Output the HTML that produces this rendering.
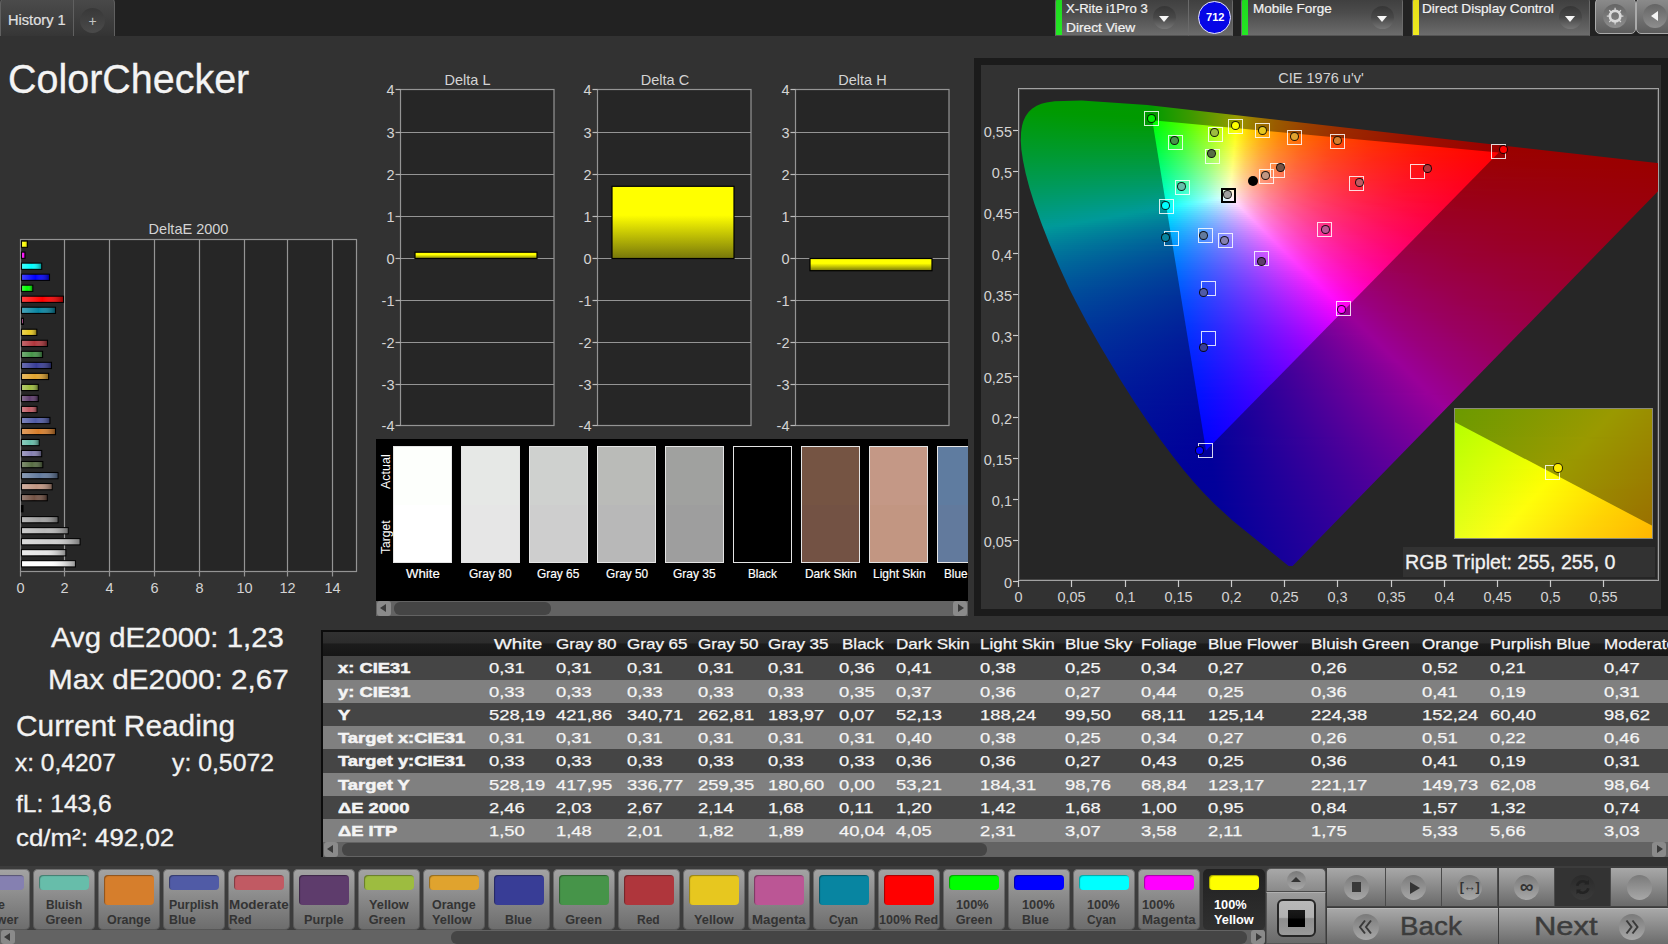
<!DOCTYPE html>
<html><head><meta charset="utf-8"><title>ColorChecker</title>
<style>
html,body{margin:0;padding:0}
body{width:1668px;height:944px;overflow:hidden;position:relative;background:#323232;font-family:"Liberation Sans",sans-serif;color:#e6e6e6}
div,span,i,b{position:absolute;box-sizing:border-box;white-space:nowrap}
i{display:block;font-style:normal}
svg{position:absolute;left:0;top:0}
svg text{font-family:"Liberation Sans",sans-serif;fill:#d4d4d4}
svg line,svg rect{stroke-width:1.2}
.cie{left:1019px;top:89px;width:639px;height:491px;overflow:hidden}
.cie i{left:0;width:639px;height:2px}
.ins{left:1455px;top:409px;width:197px;height:129px;overflow:hidden}
.ins i{left:0;width:197px;height:2px}
.t{font-size:15px;color:#ececec;transform-origin:0 50%;transform:scaleX(1.15);line-height:23px;height:23px}
.tb{font-weight:bold}
.row{left:323px;width:1345px;height:23px}
.sw{top:446px;width:59px;height:117px;border:1px solid #e4e4e4}
.sw i{left:0;top:0;width:57px;height:58px}
.swl{top:565px;width:80px;text-align:center;font-size:12.5px;color:#fff;line-height:16px}
.btn{top:869px;width:62px;height:61px;border-radius:5px;background:linear-gradient(#a4a4a4,#6c6c6c);box-shadow:inset 0 0 0 1px rgba(70,70,70,.55)}
.btn i{left:6px;top:6px;width:50px;border-radius:4px;box-shadow:inset 1px 1px 1px rgba(0,0,0,.35)}
.btn span{left:0;width:62px;text-align:center;font-weight:bold;font-size:12.5px;color:#333;line-height:15px}
.mk{width:15px;height:15px;border:1.8px solid rgba(255,255,255,.84)}
.mc{width:9px;height:9px;border-radius:50%;border:1.2px solid rgba(0,0,0,.85)}
</style></head><body>
<div style="left:0;top:0;width:1668px;height:36px;background:#222"></div><div style="left:0;top:-3px;width:74px;height:39px;background:linear-gradient(#4c4c4c,#363636);border:1px solid #606060;border-bottom:0;border-radius:6px 0 0 0"></div><div style="left:73px;top:-3px;width:42px;height:39px;background:linear-gradient(#4a4a4a,#343434);border:1px solid #606060;border-bottom:0;border-radius:0 6px 0 0"></div><div style="left:8.00px;top:11.53px;font-size:15.2px;line-height:15.2px;color:#e0e0e0;transform-origin:0 0;transform:scaleX(0.9627);-webkit-text-stroke:0.2px;">History 1</div><div style="left:80px;top:8px;width:25px;height:25px;border-radius:50%;background:linear-gradient(#383838,#4a4a4a)"></div><div style="left:88.5px;top:13px;font-size:14px;color:#c4c4c4;line-height:16px">+</div><div style="left:1055px;top:-3px;width:134px;height:39px;background:linear-gradient(#3e3e3e,#4c4c4c 40%,#6c6c6c);border:1px solid #6a6a6a;border-bottom-color:#555;border-radius:5px 0 0 0;overflow:hidden"><i style="left:-1px;top:0;width:7px;height:38px;background:linear-gradient(#1fd81f,#25e825)"></i></div><div style="left:1152.5px;top:6px;width:23px;height:23px;border-radius:50%;background:linear-gradient(#363636,#484848 50%,#767676)"></div><div style="left:1158.5px;top:16px;width:0;height:0;border-left:5.5px solid transparent;border-right:5.5px solid transparent;border-top:6.5px solid #f6f6f6"></div><div style="left:1066.20px;top:1.90px;font-size:13px;line-height:13px;color:#f2f2f2;transform-origin:0 0;transform:scaleX(1.0099);-webkit-text-stroke:0.2px;">X-Rite i1Pro 3</div><div style="left:1066.20px;top:20.50px;font-size:13px;line-height:13px;color:#f2f2f2;transform-origin:0 0;transform:scaleX(1.0565);-webkit-text-stroke:0.2px;">Direct View</div><div style="left:1188px;top:-3px;width:45px;height:39px;background:linear-gradient(#3e3e3e,#4c4c4c 40%,#6c6c6c);border:1px solid #6a6a6a;border-bottom-color:#555;border-radius:0 5px 0 0"></div><div style="left:1197.5px;top:1px;width:33px;height:33px;border-radius:50%;background:#0606e6;border:1.3px solid #e8e8ff"></div><div style="left:1205.50px;top:12.06px;font-size:10.8px;line-height:10.8px;color:#fff;transform-origin:0 0;transform:scaleX(1.0278);font-weight:bold;">712</div><div style="left:1241px;top:-3px;width:162px;height:39px;background:linear-gradient(#3e3e3e,#4c4c4c 40%,#6c6c6c);border:1px solid #6a6a6a;border-bottom-color:#555;border-radius:5px 5px 0 0;overflow:hidden"><i style="left:-1px;top:0;width:7px;height:38px;background:linear-gradient(#1fd81f,#25e825)"></i></div><div style="left:1370.5px;top:6px;width:23px;height:23px;border-radius:50%;background:linear-gradient(#363636,#484848 50%,#767676)"></div><div style="left:1376.5px;top:16px;width:0;height:0;border-left:5.5px solid transparent;border-right:5.5px solid transparent;border-top:6.5px solid #f6f6f6"></div><div style="left:1252.90px;top:1.90px;font-size:13px;line-height:13px;color:#f2f2f2;transform-origin:0 0;transform:scaleX(1.0376);-webkit-text-stroke:0.2px;">Mobile Forge</div><div style="left:1412px;top:-3px;width:178px;height:39px;background:linear-gradient(#3e3e3e,#4c4c4c 40%,#6c6c6c);border:1px solid #6a6a6a;border-bottom-color:#555;border-radius:5px 5px 0 0;overflow:hidden"><i style="left:-1px;top:0;width:7px;height:38px;background:linear-gradient(#e6de18,#f0ea20)"></i></div><div style="left:1558.5px;top:6px;width:23px;height:23px;border-radius:50%;background:linear-gradient(#363636,#484848 50%,#767676)"></div><div style="left:1564.5px;top:16px;width:0;height:0;border-left:5.5px solid transparent;border-right:5.5px solid transparent;border-top:6.5px solid #f6f6f6"></div><div style="left:1422.20px;top:1.90px;font-size:13px;line-height:13px;color:#f2f2f2;transform-origin:0 0;transform:scaleX(1.0481);-webkit-text-stroke:0.2px;">Direct Display Control</div><div style="left:1595px;top:-2px;width:41px;height:36px;background:linear-gradient(#8c8c8c,#5c5c5c);border:1px solid #aaa;border-radius:5px"></div><div style="left:1636px;top:-2px;width:41px;height:36px;background:linear-gradient(#8c8c8c,#5c5c5c);border:1px solid #aaa;border-radius:5px"></div><div style="left:1603px;top:4px;width:24px;height:24px;border-radius:50%;background:linear-gradient(#646464,#8e8e8e)"></div><div style="left:1643px;top:4px;width:24px;height:24px;border-radius:50%;background:linear-gradient(#646464,#8e8e8e)"></div><div style="left:1650.5px;top:10.5px;width:0;height:0;border-top:5.7px solid transparent;border-bottom:5.7px solid transparent;border-right:7.5px solid #f4f4f4"></div><svg width="1668" height="40" style="pointer-events:none"><g transform="translate(1615.1,16.1)" fill="none" stroke="#dadada"><circle r="5.2" stroke-width="2.7"/><g stroke-width="3"><line x1="0" y1="-5.8" x2="0" y2="-8.3" transform="rotate(0)"/><line x1="0" y1="-5.8" x2="0" y2="-8.3" transform="rotate(45)"/><line x1="0" y1="-5.8" x2="0" y2="-8.3" transform="rotate(90)"/><line x1="0" y1="-5.8" x2="0" y2="-8.3" transform="rotate(135)"/><line x1="0" y1="-5.8" x2="0" y2="-8.3" transform="rotate(180)"/><line x1="0" y1="-5.8" x2="0" y2="-8.3" transform="rotate(225)"/><line x1="0" y1="-5.8" x2="0" y2="-8.3" transform="rotate(270)"/><line x1="0" y1="-5.8" x2="0" y2="-8.3" transform="rotate(315)"/></g></g></svg><div style="left:8.30px;top:59.23px;font-size:40.6px;line-height:40.6px;color:#f4f4f4;transform-origin:0 0;transform:scaleX(0.9725);-webkit-text-stroke:0.3px;">ColorChecker</div><div style="left:51.25px;top:624.39px;font-size:27.3px;line-height:27.3px;color:#f2f2f2;transform-origin:0 0;transform:scaleX(1.0751);-webkit-text-stroke:0.3px;">Avg dE2000: 1,23</div><div style="left:47.50px;top:665.64px;font-size:27.3px;line-height:27.3px;color:#f2f2f2;transform-origin:0 0;transform:scaleX(1.0870);-webkit-text-stroke:0.3px;">Max dE2000: 2,67</div><div style="left:15.50px;top:711.70px;font-size:29px;line-height:29px;color:#f2f2f2;transform-origin:0 0;transform:scaleX(1.0294);-webkit-text-stroke:0.3px;">Current Reading</div><div style="left:15.30px;top:751.26px;font-size:24.5px;line-height:24.5px;color:#f2f2f2;transform-origin:0 0;transform:scaleX(0.9995);-webkit-text-stroke:0.3px;">x: 0,4207</div><div style="left:172.30px;top:751.26px;font-size:24.5px;line-height:24.5px;color:#f2f2f2;transform-origin:0 0;transform:scaleX(1.0124);-webkit-text-stroke:0.3px;">y: 0,5072</div><div style="left:15.80px;top:791.76px;font-size:24.5px;line-height:24.5px;color:#f2f2f2;transform-origin:0 0;transform:scaleX(1.0047);-webkit-text-stroke:0.3px;">fL: 143,6</div><div style="left:15.80px;top:825.76px;font-size:24.5px;line-height:24.5px;color:#f2f2f2;transform-origin:0 0;transform:scaleX(1.0564);-webkit-text-stroke:0.3px;">cd/m²: 492,02</div><svg width="1668" height="944" viewBox="0 0 1668 944"><rect x="20.5" y="239.5" width="336.0" height="332.0" fill="#262626" stroke="#949494"/><line x1="20.5" y1="571.5" x2="20.5" y2="576.5" stroke="#949494"/><text x="20.5" y="593" font-size="14.5" text-anchor="middle">0</text><line x1="64.5" y1="239.5" x2="64.5" y2="571.5" stroke="#949494"/><line x1="64.5" y1="571.5" x2="64.5" y2="576.5" stroke="#949494"/><text x="64.5" y="593" font-size="14.5" text-anchor="middle">2</text><line x1="109.5" y1="239.5" x2="109.5" y2="571.5" stroke="#949494"/><line x1="109.5" y1="571.5" x2="109.5" y2="576.5" stroke="#949494"/><text x="109.5" y="593" font-size="14.5" text-anchor="middle">4</text><line x1="154.5" y1="239.5" x2="154.5" y2="571.5" stroke="#949494"/><line x1="154.5" y1="571.5" x2="154.5" y2="576.5" stroke="#949494"/><text x="154.5" y="593" font-size="14.5" text-anchor="middle">6</text><line x1="199.5" y1="239.5" x2="199.5" y2="571.5" stroke="#949494"/><line x1="199.5" y1="571.5" x2="199.5" y2="576.5" stroke="#949494"/><text x="199.5" y="593" font-size="14.5" text-anchor="middle">8</text><line x1="244.5" y1="239.5" x2="244.5" y2="571.5" stroke="#949494"/><line x1="244.5" y1="571.5" x2="244.5" y2="576.5" stroke="#949494"/><text x="244.5" y="593" font-size="14.5" text-anchor="middle">10</text><line x1="287.5" y1="239.5" x2="287.5" y2="571.5" stroke="#949494"/><line x1="287.5" y1="571.5" x2="287.5" y2="576.5" stroke="#949494"/><text x="287.5" y="593" font-size="14.5" text-anchor="middle">12</text><line x1="332.5" y1="239.5" x2="332.5" y2="571.5" stroke="#949494"/><line x1="332.5" y1="571.5" x2="332.5" y2="576.5" stroke="#949494"/><text x="332.5" y="593" font-size="14.5" text-anchor="middle">14</text><text x="188.5" y="234" font-size="14.5" text-anchor="middle">DeltaE 2000</text><defs><linearGradient id="bg" x1="0" x2="1" y1="0" y2="0"><stop offset="0" stop-color="#fff" stop-opacity=".25"/><stop offset=".5" stop-color="#fff" stop-opacity="0"/><stop offset="1" stop-color="#000" stop-opacity=".4"/></linearGradient><linearGradient id="yg" x1="0" x2="0" y1="0" y2="1"><stop offset="0" stop-color="#ff0"/><stop offset=".4" stop-color="#ff0"/><stop offset="1" stop-color="#77770a"/></linearGradient></defs><rect x="21.5" y="241.10" width="5.9" height="6.2" fill="#ffff00" stroke="#000" style="stroke-width:1.1"/><rect x="22" y="241.60" width="4.9" height="5.2" fill="url(#bg)" style="stroke-width:0"/><rect x="21.5" y="252.12" width="3.5" height="6.2" fill="#ff00ff" stroke="#000" style="stroke-width:1.1"/><rect x="22" y="252.62" width="2.5" height="5.2" fill="url(#bg)" style="stroke-width:0"/><rect x="21.5" y="263.14" width="20.2" height="6.2" fill="#00ffff" stroke="#000" style="stroke-width:1.1"/><rect x="22" y="263.64" width="19.2" height="5.2" fill="url(#bg)" style="stroke-width:0"/><rect x="21.5" y="274.16" width="28.0" height="6.2" fill="#0000ff" stroke="#000" style="stroke-width:1.1"/><rect x="22" y="274.66" width="27.0" height="5.2" fill="url(#bg)" style="stroke-width:0"/><rect x="21.5" y="285.18" width="11.3" height="6.2" fill="#00ff00" stroke="#000" style="stroke-width:1.1"/><rect x="22" y="285.68" width="10.3" height="5.2" fill="url(#bg)" style="stroke-width:0"/><rect x="21.5" y="296.20" width="42.0" height="6.2" fill="#ff0000" stroke="#000" style="stroke-width:1.1"/><rect x="22" y="296.70" width="41.0" height="5.2" fill="url(#bg)" style="stroke-width:0"/><rect x="21.5" y="307.22" width="34.0" height="6.2" fill="#0885a1" stroke="#000" style="stroke-width:1.1"/><rect x="22" y="307.72" width="33.0" height="5.2" fill="url(#bg)" style="stroke-width:0"/><rect x="21.5" y="318.24" width="1.9" height="6.2" fill="#bb5695" stroke="#000" style="stroke-width:1.1"/><rect x="22" y="318.74" width="0.9" height="5.2" fill="url(#bg)" style="stroke-width:0"/><rect x="21.5" y="329.26" width="15.3" height="6.2" fill="#e7c71f" stroke="#000" style="stroke-width:1.1"/><rect x="22" y="329.76" width="14.3" height="5.2" fill="url(#bg)" style="stroke-width:0"/><rect x="21.5" y="340.28" width="26.0" height="6.2" fill="#af363c" stroke="#000" style="stroke-width:1.1"/><rect x="22" y="340.78" width="25.0" height="5.2" fill="url(#bg)" style="stroke-width:0"/><rect x="21.5" y="351.30" width="21.1" height="6.2" fill="#469449" stroke="#000" style="stroke-width:1.1"/><rect x="22" y="351.80" width="20.1" height="5.2" fill="url(#bg)" style="stroke-width:0"/><rect x="21.5" y="362.32" width="30.0" height="6.2" fill="#383d96" stroke="#000" style="stroke-width:1.1"/><rect x="22" y="362.82" width="29.0" height="5.2" fill="url(#bg)" style="stroke-width:0"/><rect x="21.5" y="373.34" width="27.1" height="6.2" fill="#e0a32e" stroke="#000" style="stroke-width:1.1"/><rect x="22" y="373.84" width="26.1" height="5.2" fill="url(#bg)" style="stroke-width:0"/><rect x="21.5" y="384.36" width="16.8" height="6.2" fill="#9dbc40" stroke="#000" style="stroke-width:1.1"/><rect x="22" y="384.86" width="15.8" height="5.2" fill="url(#bg)" style="stroke-width:0"/><rect x="21.5" y="395.38" width="16.8" height="6.2" fill="#5e3c6c" stroke="#000" style="stroke-width:1.1"/><rect x="22" y="395.88" width="15.8" height="5.2" fill="url(#bg)" style="stroke-width:0"/><rect x="21.5" y="406.40" width="15.5" height="6.2" fill="#c15a63" stroke="#000" style="stroke-width:1.1"/><rect x="22" y="406.90" width="14.5" height="5.2" fill="url(#bg)" style="stroke-width:0"/><rect x="21.5" y="417.42" width="28.4" height="6.2" fill="#505ba6" stroke="#000" style="stroke-width:1.1"/><rect x="22" y="417.92" width="27.4" height="5.2" fill="url(#bg)" style="stroke-width:0"/><rect x="21.5" y="428.44" width="34.0" height="6.2" fill="#d67e2c" stroke="#000" style="stroke-width:1.1"/><rect x="22" y="428.94" width="33.0" height="5.2" fill="url(#bg)" style="stroke-width:0"/><rect x="21.5" y="439.46" width="17.7" height="6.2" fill="#67bdaa" stroke="#000" style="stroke-width:1.1"/><rect x="22" y="439.96" width="16.7" height="5.2" fill="url(#bg)" style="stroke-width:0"/><rect x="21.5" y="450.48" width="20.2" height="6.2" fill="#8580b1" stroke="#000" style="stroke-width:1.1"/><rect x="22" y="450.98" width="19.2" height="5.2" fill="url(#bg)" style="stroke-width:0"/><rect x="21.5" y="461.50" width="21.3" height="6.2" fill="#576c43" stroke="#000" style="stroke-width:1.1"/><rect x="22" y="462.00" width="20.3" height="5.2" fill="url(#bg)" style="stroke-width:0"/><rect x="21.5" y="472.52" width="36.5" height="6.2" fill="#627a9d" stroke="#000" style="stroke-width:1.1"/><rect x="22" y="473.02" width="35.5" height="5.2" fill="url(#bg)" style="stroke-width:0"/><rect x="21.5" y="483.54" width="30.7" height="6.2" fill="#c29682" stroke="#000" style="stroke-width:1.1"/><rect x="22" y="484.04" width="29.7" height="5.2" fill="url(#bg)" style="stroke-width:0"/><rect x="21.5" y="494.56" width="25.8" height="6.2" fill="#735244" stroke="#000" style="stroke-width:1.1"/><rect x="22" y="495.06" width="24.8" height="5.2" fill="url(#bg)" style="stroke-width:0"/><rect x="21.5" y="505.58" width="1.5" height="6.2" fill="#000000" stroke="#000" style="stroke-width:1.1"/><rect x="22" y="506.08" width="0.5" height="5.2" fill="url(#bg)" style="stroke-width:0"/><rect x="21.5" y="516.60" width="36.5" height="6.2" fill="#a0a0a0" stroke="#000" style="stroke-width:1.1"/><rect x="22" y="517.10" width="35.5" height="5.2" fill="url(#bg)" style="stroke-width:0"/><rect x="21.5" y="527.62" width="46.7" height="6.2" fill="#b9b9b9" stroke="#000" style="stroke-width:1.1"/><rect x="22" y="528.12" width="45.7" height="5.2" fill="url(#bg)" style="stroke-width:0"/><rect x="21.5" y="538.64" width="58.5" height="6.2" fill="#cfcfcf" stroke="#000" style="stroke-width:1.1"/><rect x="22" y="539.14" width="57.5" height="5.2" fill="url(#bg)" style="stroke-width:0"/><rect x="21.5" y="549.66" width="44.3" height="6.2" fill="#e6e6e6" stroke="#000" style="stroke-width:1.1"/><rect x="22" y="550.16" width="43.3" height="5.2" fill="url(#bg)" style="stroke-width:0"/><rect x="21.5" y="560.68" width="53.9" height="6.2" fill="#ffffff" stroke="#000" style="stroke-width:1.1"/><rect x="22" y="561.18" width="52.9" height="5.2" fill="url(#bg)" style="stroke-width:0"/><rect x="400.5" y="89.5" width="153.5" height="336.0" fill="#262626" stroke="#949494"/><line x1="395.5" y1="89.5" x2="400.5" y2="89.5" stroke="#bbb"/><text x="394.5" y="94.5" font-size="14.5" text-anchor="end">4</text><line x1="400.5" y1="132.5" x2="554.0" y2="132.5" stroke="#949494"/><line x1="395.5" y1="132.5" x2="400.5" y2="132.5" stroke="#bbb"/><text x="394.5" y="137.5" font-size="14.5" text-anchor="end">3</text><line x1="400.5" y1="174.5" x2="554.0" y2="174.5" stroke="#949494"/><line x1="395.5" y1="174.5" x2="400.5" y2="174.5" stroke="#bbb"/><text x="394.5" y="179.5" font-size="14.5" text-anchor="end">2</text><line x1="400.5" y1="216.5" x2="554.0" y2="216.5" stroke="#949494"/><line x1="395.5" y1="216.5" x2="400.5" y2="216.5" stroke="#bbb"/><text x="394.5" y="221.5" font-size="14.5" text-anchor="end">1</text><line x1="400.5" y1="258.5" x2="554.0" y2="258.5" stroke="#949494"/><line x1="395.5" y1="258.5" x2="400.5" y2="258.5" stroke="#bbb"/><text x="394.5" y="263.5" font-size="14.5" text-anchor="end">0</text><line x1="400.5" y1="300.5" x2="554.0" y2="300.5" stroke="#949494"/><line x1="395.5" y1="300.5" x2="400.5" y2="300.5" stroke="#bbb"/><text x="394.5" y="305.5" font-size="14.5" text-anchor="end">-1</text><line x1="400.5" y1="342.5" x2="554.0" y2="342.5" stroke="#949494"/><line x1="395.5" y1="342.5" x2="400.5" y2="342.5" stroke="#bbb"/><text x="394.5" y="347.5" font-size="14.5" text-anchor="end">-2</text><line x1="400.5" y1="384.5" x2="554.0" y2="384.5" stroke="#949494"/><line x1="395.5" y1="384.5" x2="400.5" y2="384.5" stroke="#bbb"/><text x="394.5" y="389.5" font-size="14.5" text-anchor="end">-3</text><line x1="395.5" y1="425.5" x2="400.5" y2="425.5" stroke="#bbb"/><text x="394.5" y="430.5" font-size="14.5" text-anchor="end">-4</text><text x="467.5" y="85" font-size="14.5" text-anchor="middle">Delta L</text><rect x="415.0" y="252.2" width="122" height="6.3" fill="url(#yg)" stroke="#000"/><rect x="597.5" y="89.5" width="153.5" height="336.0" fill="#262626" stroke="#949494"/><line x1="592.5" y1="89.5" x2="597.5" y2="89.5" stroke="#bbb"/><text x="591.5" y="94.5" font-size="14.5" text-anchor="end">4</text><line x1="597.5" y1="132.5" x2="751.0" y2="132.5" stroke="#949494"/><line x1="592.5" y1="132.5" x2="597.5" y2="132.5" stroke="#bbb"/><text x="591.5" y="137.5" font-size="14.5" text-anchor="end">3</text><line x1="597.5" y1="174.5" x2="751.0" y2="174.5" stroke="#949494"/><line x1="592.5" y1="174.5" x2="597.5" y2="174.5" stroke="#bbb"/><text x="591.5" y="179.5" font-size="14.5" text-anchor="end">2</text><line x1="597.5" y1="216.5" x2="751.0" y2="216.5" stroke="#949494"/><line x1="592.5" y1="216.5" x2="597.5" y2="216.5" stroke="#bbb"/><text x="591.5" y="221.5" font-size="14.5" text-anchor="end">1</text><line x1="597.5" y1="258.5" x2="751.0" y2="258.5" stroke="#949494"/><line x1="592.5" y1="258.5" x2="597.5" y2="258.5" stroke="#bbb"/><text x="591.5" y="263.5" font-size="14.5" text-anchor="end">0</text><line x1="597.5" y1="300.5" x2="751.0" y2="300.5" stroke="#949494"/><line x1="592.5" y1="300.5" x2="597.5" y2="300.5" stroke="#bbb"/><text x="591.5" y="305.5" font-size="14.5" text-anchor="end">-1</text><line x1="597.5" y1="342.5" x2="751.0" y2="342.5" stroke="#949494"/><line x1="592.5" y1="342.5" x2="597.5" y2="342.5" stroke="#bbb"/><text x="591.5" y="347.5" font-size="14.5" text-anchor="end">-2</text><line x1="597.5" y1="384.5" x2="751.0" y2="384.5" stroke="#949494"/><line x1="592.5" y1="384.5" x2="597.5" y2="384.5" stroke="#bbb"/><text x="591.5" y="389.5" font-size="14.5" text-anchor="end">-3</text><line x1="592.5" y1="425.5" x2="597.5" y2="425.5" stroke="#bbb"/><text x="591.5" y="430.5" font-size="14.5" text-anchor="end">-4</text><text x="665" y="85" font-size="14.5" text-anchor="middle">Delta C</text><rect x="612.0" y="186.3" width="122" height="72.2" fill="url(#yg)" stroke="#000"/><rect x="795.5" y="89.5" width="153.5" height="336.0" fill="#262626" stroke="#949494"/><line x1="790.5" y1="89.5" x2="795.5" y2="89.5" stroke="#bbb"/><text x="789.5" y="94.5" font-size="14.5" text-anchor="end">4</text><line x1="795.5" y1="132.5" x2="949.0" y2="132.5" stroke="#949494"/><line x1="790.5" y1="132.5" x2="795.5" y2="132.5" stroke="#bbb"/><text x="789.5" y="137.5" font-size="14.5" text-anchor="end">3</text><line x1="795.5" y1="174.5" x2="949.0" y2="174.5" stroke="#949494"/><line x1="790.5" y1="174.5" x2="795.5" y2="174.5" stroke="#bbb"/><text x="789.5" y="179.5" font-size="14.5" text-anchor="end">2</text><line x1="795.5" y1="216.5" x2="949.0" y2="216.5" stroke="#949494"/><line x1="790.5" y1="216.5" x2="795.5" y2="216.5" stroke="#bbb"/><text x="789.5" y="221.5" font-size="14.5" text-anchor="end">1</text><line x1="795.5" y1="258.5" x2="949.0" y2="258.5" stroke="#949494"/><line x1="790.5" y1="258.5" x2="795.5" y2="258.5" stroke="#bbb"/><text x="789.5" y="263.5" font-size="14.5" text-anchor="end">0</text><line x1="795.5" y1="300.5" x2="949.0" y2="300.5" stroke="#949494"/><line x1="790.5" y1="300.5" x2="795.5" y2="300.5" stroke="#bbb"/><text x="789.5" y="305.5" font-size="14.5" text-anchor="end">-1</text><line x1="795.5" y1="342.5" x2="949.0" y2="342.5" stroke="#949494"/><line x1="790.5" y1="342.5" x2="795.5" y2="342.5" stroke="#bbb"/><text x="789.5" y="347.5" font-size="14.5" text-anchor="end">-2</text><line x1="795.5" y1="384.5" x2="949.0" y2="384.5" stroke="#949494"/><line x1="790.5" y1="384.5" x2="795.5" y2="384.5" stroke="#bbb"/><text x="789.5" y="389.5" font-size="14.5" text-anchor="end">-3</text><line x1="790.5" y1="425.5" x2="795.5" y2="425.5" stroke="#bbb"/><text x="789.5" y="430.5" font-size="14.5" text-anchor="end">-4</text><text x="862.5" y="85" font-size="14.5" text-anchor="middle">Delta H</text><rect x="810.0" y="258.5" width="122" height="12.2" fill="url(#yg)" stroke="#000"/></svg><div style="left:376px;top:439px;width:592px;height:177px;background:#000;overflow:hidden"><div class="sw" style="left:17px;top:7px;background:#ffffff"><i style="background:#fdfffc"></i></div><div class="sw" style="left:85px;top:7px;background:#e6e6e6"><i style="background:#e6e8e6"></i></div><div class="sw" style="left:153px;top:7px;background:#cecece"><i style="background:#cfd1cf"></i></div><div class="sw" style="left:221px;top:7px;background:#b8b8b8"><i style="background:#babbb8"></i></div><div class="sw" style="left:289px;top:7px;background:#9e9e9e"><i style="background:#a0a19f"></i></div><div class="sw" style="left:357px;top:7px;background:#000"><i style="background:#000"></i></div><div class="sw" style="left:425px;top:7px;background:#735244"><i style="background:#755443"></i></div><div class="sw" style="left:493px;top:7px;background:#c29682"><i style="background:#c49886"></i></div><div class="sw" style="left:561px;top:7px;background:#627a9d"><i style="background:#5f7ca0"></i></div><div style="left:0;top:162px;width:592px;height:15px;background:#636363"></div><div style="left:1px;top:162px;width:14px;height:15px;background:#8a8a8a;border-radius:3px"></div><div style="left:4px;top:165px;width:0;height:0;border-top:4.5px solid transparent;border-bottom:4.5px solid transparent;border-right:6px solid #3a3a3a"></div><div style="left:577px;top:162px;width:14px;height:15px;background:#8a8a8a;border-radius:3px"></div><div style="left:582px;top:165px;width:0;height:0;border-top:4.5px solid transparent;border-bottom:4.5px solid transparent;border-left:6px solid #3a3a3a"></div><div style="left:18px;top:163px;width:157px;height:13px;background:#454545;border-radius:6px"></div></div><div style="left:405.75px;top:566.74px;font-size:13.3px;line-height:13.3px;color:#fff;transform-origin:0 0;transform:scaleX(0.9926);-webkit-text-stroke:0.2px;">White</div><div style="left:469.25px;top:566.74px;font-size:13.3px;line-height:13.3px;color:#fff;transform-origin:0 0;transform:scaleX(0.8995);-webkit-text-stroke:0.2px;">Gray 80</div><div style="left:537.25px;top:566.74px;font-size:13.3px;line-height:13.3px;color:#fff;transform-origin:0 0;transform:scaleX(0.8942);-webkit-text-stroke:0.2px;">Gray 65</div><div style="left:605.50px;top:566.74px;font-size:13.3px;line-height:13.3px;color:#fff;transform-origin:0 0;transform:scaleX(0.8889);-webkit-text-stroke:0.2px;">Gray 50</div><div style="left:673.25px;top:566.74px;font-size:13.3px;line-height:13.3px;color:#fff;transform-origin:0 0;transform:scaleX(0.8995);-webkit-text-stroke:0.2px;">Gray 35</div><div style="left:748.25px;top:566.74px;font-size:13.3px;line-height:13.3px;color:#fff;transform-origin:0 0;transform:scaleX(0.8846);-webkit-text-stroke:0.2px;">Black</div><div style="left:805.00px;top:566.74px;font-size:13.3px;line-height:13.3px;color:#fff;transform-origin:0 0;transform:scaleX(0.8957);-webkit-text-stroke:0.2px;">Dark Skin</div><div style="left:872.50px;top:566.74px;font-size:13.3px;line-height:13.3px;color:#fff;transform-origin:0 0;transform:scaleX(0.9013);-webkit-text-stroke:0.2px;">Light Skin</div><div style="left:930px;top:560px;width:38px;height:30px;overflow:hidden"><div style="left:13.75px;top:6.74px;font-size:13.3px;line-height:13.3px;color:#fff;transform-origin:0 0;transform:scaleX(0.8810);-webkit-text-stroke:0.2px;">Blue Sky</div></div><div style="left:378.74px;top:488.75px;font-size:13.3px;line-height:13.3px;color:#fff;transform-origin:0 0;transform:rotate(-90deg) scaleX(0.9388)">Actual</div><div style="left:378.74px;top:554.25px;font-size:13.3px;line-height:13.3px;color:#fff;transform-origin:0 0;transform:rotate(-90deg) scaleX(0.9122)">Target</div><div style="left:974px;top:58px;width:700px;height:558px;background:#1b1b1b"></div><div style="left:981px;top:65px;width:680px;height:544px;background:#323232"></div><div style="left:1018px;top:88px;width:641px;height:493px;background:#262626;border:1px solid #a2a2a2;box-shadow:inset 0 0 0 1px rgba(150,150,150,.3)"></div><div class="cie" style="clip-path:polygon(273.6px 476.9px,269.7px 477.1px,213.5px 431.4px,196.3px 415.7px,184.5px 403.8px,175.4px 393.7px,165.0px 381.4px,153.6px 367.1px,141.6px 351.0px,128.9px 333.1px,115.6px 313.3px,102.1px 291.9px,81.6px 257.8px,68.3px 234.3px,55.8px 210.6px,50.0px 198.9px,39.5px 176.1px,30.3px 154.4px,22.3px 134.0px,15.7px 115.4px,10.5px 98.9px,6.7px 84.4px,4.0px 71.6px,2.4px 60.7px,1.8px 51.3px,2.1px 43.2px,2.6px 39.5px,3.2px 36.2px,4.1px 33.1px,5.2px 30.2px,6.5px 27.6px,8.0px 25.2px,9.6px 23.1px,11.4px 21.2px,13.4px 19.5px,17.7px 16.8px,22.4px 14.8px,27.5px 13.4px,35.7px 12.2px,62.6px 11.6px,128.1px 16.1px,663.6px 77.0px)"><i style="top:10px;background:linear-gradient(90deg,#009a00 44px,#009a00 71px)"></i><i style="top:12px;background:linear-gradient(90deg,#009a00 24px,#009a00 99px)"></i><i style="top:14px;background:linear-gradient(90deg,#009a00 18px,#009a00 128px)"></i><i style="top:16px;background:linear-gradient(90deg,#009a00 14px,#019a00 132px,#159a00 146px)"></i><i style="top:18px;background:linear-gradient(90deg,#009a00 11px,#019a00 132px,#319a00 164px)"></i><i style="top:20px;background:linear-gradient(90deg,#009a01 9px,#019a00 132px,#3a9a00 170px,#4d9a00 181px)"></i><i style="top:22px;background:linear-gradient(90deg,#009a03 7px,#009a00 74px,#019a00 133px,#3a9a00 170px,#709a00 199px)"></i><i style="top:24px;background:linear-gradient(90deg,#009a05 6px,#009a00 88px,#019a00 133px,#3a9a00 170px,#769a00 202px,#979a00 217px)"></i><i style="top:26px;background:linear-gradient(90deg,#009a07 5px,#009a00 107px,#019a00 133px,#3a9a00 170px,#769a00 202px,#9a9900 219px,#9a7c00 234px)"></i><i style="top:28px;background:linear-gradient(90deg,#009a0a 4px,#009a00 128px,#029a00 134px,#3b9a00 171px,#789a00 203px,#9a9a00 218px,#9a7800 236px,#9a6200 252px)"></i><i style="top:30px;background:linear-gradient(90deg,#009a0c 3px,#019a00 134px,#3b9a00 171px,#779a00 202px,#9a9a00 218px,#9a7900 235px,#9a5c00 257px,#9a5000 269px)"></i><i style="top:32px;background:linear-gradient(90deg,#009a0e 2px,#019a02 134px,#399a00 170px,#759a00 201px,#9a9a00 218px,#9a7a00 234px,#9a5c00 256px,#9a4100 286px,#9a4100 287px)"></i><i style="top:34px;background:linear-gradient(90deg,#009a10 2px,#009a05 134px,#399a00 170px,#759a00 201px,#9a9a00 218px,#9a7a00 234px,#9a5c00 256px,#9a4100 286px,#9a3500 305px)"></i><i style="top:36px;background:linear-gradient(90deg,#009a12 1px,#019a07 135px,#3b9a03 171px,#779a00 202px,#9a9900 218px,#9a7900 234px,#9a5b00 256px,#9a4100 286px,#9a2c00 322px)"></i><i style="top:38px;background:linear-gradient(90deg,#009a14 1px,#019a0a 135px,#3b9a06 171px,#779a02 202px,#9a9a00 217px,#9a7700 235px,#9a5a00 257px,#9a3f00 287px,#9a2800 330px,#9a2400 340px)"></i><i style="top:40px;background:linear-gradient(90deg,#009a16 1px,#009a0d 135px,#3a9a09 171px,#759a06 201px,#9a9a03 217px,#9a7800 234px,#9a5a00 256px,#9a4000 286px,#9a2800 329px,#9a1d00 357px)"></i><i style="top:42px;background:linear-gradient(90deg,#009a18 1px,#019a10 136px,#3a9a0c 171px,#769a09 201px,#9a9a07 217px,#9a7a04 233px,#9a5c01 254px,#9a4100 283px,#9a2a00 324px,#9a1700 375px)"></i><i style="top:44px;background:linear-gradient(90deg,#009a1a 0,#019a13 136px,#3a9a10 171px,#769a0c 201px,#9a9a0a 217px,#9a7907 233px,#9a5c03 254px,#9a4100 283px,#9a2900 324px,#9a1400 385px,#9a1200 392px)"></i><i style="top:46px;background:linear-gradient(90deg,#009a1c 0,#009a15 136px,#3a9a13 171px,#769a10 201px,#9a990e 217px,#9a7909 233px,#9a5b05 254px,#9a4102 283px,#9a2900 324px,#9a1400 385px,#9a0e00 410px)"></i><i style="top:48px;background:linear-gradient(90deg,#009a1e 0,#019a18 137px,#3b9a16 172px,#789a13 202px,#9a9912 217px,#9a780d 233px,#9a5b08 254px,#9a4004 283px,#9a2800 324px,#9a1300 386px,#9a0a00 428px)"></i><i style="top:50px;background:linear-gradient(90deg,#009a21 0,#019a1b 137px,#399a19 171px,#769a17 201px,#9a9a16 216px,#9a7810 233px,#9a5a0a 254px,#9a4006 283px,#9a2801 324px,#9a1300 386px,#9a0700 445px)"></i><i style="top:52px;background:linear-gradient(90deg,#009a23 0,#009a1e 137px,#399a1c 171px,#749a1b 200px,#9a9a19 216px,#9a7b13 231px,#9a5d0e 251px,#9a4208 279px,#9a2a04 318px,#9a1500 376px,#9a0400 463px)"></i><i style="top:54px;background:linear-gradient(90deg,#009a25 0,#019a21 138px,#3b9a20 172px,#779a1e 201px,#9a9a1d 216px,#9a7a16 231px,#9a5d10 251px,#9a420a 279px,#9a2a05 318px,#9a1501 377px,#9a0200 470px,#9a0100 480px)"></i><i style="top:56px;background:linear-gradient(90deg,#009a27 1px,#019a24 138px,#3b9a23 172px,#779a22 201px,#9a9921 216px,#9a7a1a 231px,#9a5c13 251px,#9a410c 279px,#9a2a07 318px,#9a1402 377px,#9a0200 470px,#9a0000 498px)"></i><i style="top:58px;background:linear-gradient(90deg,#009a29 1px,#009a27 138px,#399a27 171px,#759a26 200px,#9a9925 216px,#9a791d 231px,#9a5c15 251px,#9a410e 279px,#9a2908 318px,#9a1403 377px,#9a0200 470px,#9a0000 516px)"></i><i style="top:60px;background:linear-gradient(90deg,#009a2c 1px,#019a2a 139px,#3a9a2a 172px,#779a29 201px,#9a9a29 215px,#9a771f 232px,#9a5a18 252px,#9a4010 280px,#9a280a 320px,#9a1304 380px,#9a0100 475px,#9a0000 533px)"></i><i style="top:62px;background:linear-gradient(90deg,#009a2e 1px,#019a2e 139px,#3a9a2d 172px,#759a2d 200px,#9a9a2d 215px,#9a7a24 230px,#9a5c1b 250px,#9a4113 277px,#9a290c 316px,#9a1406 374px,#9a0200 466px,#9a0000 529px,#9a0000 551px)"></i><i style="top:64px;background:linear-gradient(90deg,#009a30 1px,#009a31 139px,#3a9a31 172px,#769a31 200px,#9a9a31 215px,#9a7927 230px,#9a5b1e 250px,#9a4115 277px,#9a290e 316px,#9a1407 374px,#9a0201 466px,#9a0000 568px)"></i><i style="top:66px;background:linear-gradient(90deg,#009a32 2px,#019a34 140px,#3a9a35 172px,#769a35 200px,#9a9935 215px,#9a792a 230px,#9a5b20 250px,#9a4017 277px,#9a280f 316px,#9a1308 374px,#9a0102 466px,#9a0000 586px)"></i><i style="top:68px;background:linear-gradient(90deg,#009a35 2px,#019a37 140px,#3a9a38 172px,#769a39 200px,#9a9939 215px,#9a782e 230px,#9a5a23 250px,#9a4019 277px,#9a2811 316px,#9a1309 374px,#9a0103 466px,#9a0000 604px)"></i><i style="top:70px;background:linear-gradient(90deg,#009a37 2px,#009a3b 140px,#399a3c 172px,#769a3d 200px,#999a3e 214px,#9a7831 230px,#9a5a26 250px,#9a3f1c 277px,#9a2813 316px,#9a130b 374px,#9a0104 467px,#9a0000 619px,#9a0000 621px)"></i><i style="top:72px;background:linear-gradient(90deg,#009a39 3px,#019a3e 141px,#3b9a40 173px,#769a41 200px,#9a9a42 214px,#9a7935 229px,#9a5c29 248px,#9a411f 274px,#9a2a15 311px,#9a150d 366px,#9a0205 454px,#9a0003 500px,#9a0000 639px)"></i><i style="top:74px;background:linear-gradient(90deg,#009a3c 3px,#019a41 141px,#3b9a44 173px,#779a46 200px,#9a9a47 214px,#9a7a39 228px,#9a5d2d 247px,#9a4221 273px,#9a2a17 310px,#9a150e 365px,#9a0206 452px,#9a0004 497px,#9a0000 639px)"></i><i style="top:76px;background:linear-gradient(90deg,#009a3e 3px,#009a45 141px,#399a47 172px,#749a4a 199px,#9a9a4b 214px,#9a7a3d 228px,#9a5c30 247px,#9a4124 273px,#9a2919 310px,#9a140f 365px,#9a0207 452px,#9a0004 504px,#9a0000 639px)"></i><i style="top:78px;background:linear-gradient(90deg,#009a41 4px,#009a48 141px,#399a4b 172px,#759a4e 199px,#9a994f 214px,#9a7940 228px,#9a5b32 247px,#9a4126 273px,#9a291b 310px,#9a1411 365px,#9a0208 452px,#9a0004 525px,#9a0000 639px)"></i><i style="top:80px;background:linear-gradient(90deg,#009a43 4px,#019a4c 142px,#3a9a4f 173px,#779a53 200px,#999a54 213px,#9a7743 229px,#9a5a35 248px,#9a3f28 274px,#9a281c 311px,#9a1312 367px,#9a0109 456px,#9a0001 639px)"></i><i style="top:82px;background:linear-gradient(90deg,#009a46 5px,#009a50 142px,#3a9a53 173px,#759a57 199px,#9a9a59 213px,#9a7848 228px,#9a5a38 247px,#9a402a 273px,#9a281e 310px,#9a1313 365px,#9a010a 453px,#9a0001 639px)"></i><i style="top:84px;background:linear-gradient(90deg,#009a48 5px,#009a53 142px,#389a57 172px,#739a5b 198px,#9a9a5e 213px,#9a794c 227px,#9a5c3d 245px,#9a422e 270px,#9a2921 306px,#9a1416 359px,#9a020c 443px,#9a0009 487px,#9a0002 639px)"></i><i style="top:86px;background:linear-gradient(90deg,#009a4b 6px,#019a57 143px,#3a9a5b 173px,#759a60 199px,#9a9a62 213px,#9a7950 227px,#9a5c40 245px,#9a4130 270px,#9a2923 306px,#9a1417 359px,#9a020d 443px,#9a0009 494px,#9a0002 639px)"></i><i style="top:88px;background:linear-gradient(90deg,#009a4d 6px,#019a5b 143px,#3a9a60 173px,#769a65 199px,#9a9967 213px,#9a7854 227px,#9a5b43 245px,#9a4133 270px,#9a2925 306px,#9a1418 359px,#9a020e 444px,#9a0004 605px,#9a0003 639px)"></i><i style="top:90px;background:linear-gradient(90deg,#009a50 7px,#009a5f 143px,#399a64 173px,#769a69 199px,#999a6d 212px,#9a7656 228px,#9a5844 247px,#9a3e34 273px,#9a2625 310px,#9a1119 366px,#9a000e 453px,#9a0004 639px)"></i><i style="top:92px;background:linear-gradient(90deg,#009a53 7px,#019a63 144px,#3b9a68 174px,#769a6e 199px,#9a9a72 212px,#9a775b 227px,#9a5a49 245px,#9a4038 270px,#9a2828 306px,#9a131b 359px,#9a0110 444px,#9a0004 639px)"></i><i style="top:94px;background:linear-gradient(90deg,#009a55 8px,#009a66 141px,#029a67 145px,#3b9a6d 174px,#769a73 199px,#9a9a77 212px,#9a7b62 225px,#9a5e4e 242px,#9a433c 266px,#9a2a2c 300px,#9a151e 350px,#9a0312 429px,#9a000f 467px,#9a0005 639px)"></i><i style="top:96px;background:linear-gradient(90deg,#009a58 8px,#009a69 137px,#009a6b 144px,#399a71 173px,#749a78 198px,#9a9a7c 212px,#9a7a66 225px,#9a5d52 242px,#9a423f 266px,#9a2a2e 300px,#9a1520 350px,#9a0313 430px,#9a000f 469px,#9a0005 639px)"></i><i style="top:98px;background:linear-gradient(90deg,#009a5b 9px,#009a6d 134px,#019a6f 145px,#3b9a76 174px,#779a7d 199px,#9a9980 212px,#9a796a 225px,#9a5d55 242px,#9a4242 266px,#9a2930 300px,#9a1521 350px,#9a0214 430px,#9a0010 472px,#9a0006 639px)"></i><i style="top:100px;background:linear-gradient(90deg,#009a5e 9px,#009a70 130px,#019a73 145px,#3a9a7a 174px,#779a82 199px,#9a9985 212px,#9a796e 225px,#9a5c58 242px,#9a4144 266px,#9a2932 300px,#9a1422 351px,#9a0215 432px,#9a000d 524px,#9a0007 639px)"></i><i style="top:102px;background:linear-gradient(90deg,#009a60 10px,#009a73 128px,#009a77 145px,#3a9a7f 174px,#759a87 198px,#999a8c 211px,#9a7670 226px,#9a5959 244px,#9a3f45 268px,#9a2733 303px,#9a1223 355px,#9a0015 438px,#9a0008 611px,#9a0007 639px)"></i><i style="top:104px;background:linear-gradient(90deg,#009a63 11px,#009a76 125px,#019a7c 146px,#3a9a84 174px,#759a8c 198px,#9a9a91 211px,#9a7a77 224px,#9a5c60 241px,#9a424b 264px,#9a2a37 297px,#9a1527 346px,#9a0218 424px,#9a0013 464px,#9a0008 639px)"></i><i style="top:106px;background:linear-gradient(90deg,#009a66 11px,#009a7a 122px,#019a80 146px,#3a9a88 174px,#759a91 198px,#9a9a97 211px,#9a797c 224px,#9a5c63 241px,#9a414d 264px,#9a293a 297px,#9a1428 346px,#9a0219 424px,#9a0014 471px,#9a0008 637px)"></i><i style="top:108px;background:linear-gradient(90deg,#009a69 12px,#009a7d 120px,#009a84 146px,#399a8d 174px,#759a97 198px,#99989a 211px,#9a8489 219px,#9a6670 234px,#9a4b59 254px,#9a3143 283px,#9a1b30 325px,#9a0820 390px,#9a0017 445px,#9a000a 615px,#9a0009 635px)"></i><i style="top:110px;background:linear-gradient(90deg,#009a6c 12px,#009a80 118px,#019a89 147px,#3c9a93 175px,#72999a 197px,#9a909a 214px,#9a727f 227px,#9a5565 245px,#9a3b4e 270px,#9a2339 306px,#9a0f27 360px,#9a0019 437px,#9a000c 596px,#9a000a 633px)"></i><i style="top:112px;background:linear-gradient(90deg,#009a6f 13px,#009a84 116px,#019a8d 147px,#399a97 174px,#59979a 188px,#9a8a9a 216px,#9a6b7e 230px,#9a4f64 249px,#9a364d 275px,#9a2038 313px,#9a0c26 371px,#9a001a 438px,#9a000c 595px,#9a000a 631px)"></i><i style="top:114px;background:linear-gradient(90deg,#009a72 14px,#009a87 114px,#009a92 147px,#36999a 173px,#9a849a 218px,#9a667d 233px,#9a4a63 253px,#9a314b 281px,#9a1b36 322px,#9a0824 386px,#9a001b 439px,#9a000d 594px,#9a000b 629px)"></i><i style="top:116px;background:linear-gradient(90deg,#009a75 14px,#009a8b 112px,#019a97 148px,#1f989a 163px,#89839a 212px,#9a7f9a 220px,#9a627d 235px,#9a4662 256px,#9a2e4b 285px,#9a1836 328px,#9a0624 395px,#9a001c 438px,#9a000e 589px,#9a000c 627px)"></i><i style="top:118px;background:linear-gradient(90deg,#009a78 15px,#009a8f 111px,#01999a 148px,#68849a 199px,#9a7a9a 222px,#9a5c7c 238px,#9a4161 260px,#9a2a49 291px,#9a1534 337px,#9a0322 410px,#9a001c 447px,#9a000e 603px,#9a000d 625px)"></i><i style="top:120px;background:linear-gradient(90deg,#009a7b 16px,#009a92 109px,#00999a 137px,#00959a 148px,#67809a 200px,#9a759a 224px,#9a597d 240px,#9a3f62 262px,#9a284a 293px,#9a1435 339px,#9a0223 412px,#9a001b 466px,#9a000d 623px)"></i><i style="top:122px;background:linear-gradient(90deg,#009a7f 17px,#009a96 108px,#00989a 127px,#01909a 149px,#687b9a 202px,#9a709a 226px,#9a547c 243px,#9a3b61 266px,#9a2449 299px,#9a1034 348px,#9a0022 423px,#9a0013 554px,#9a000e 621px)"></i><i style="top:124px;background:linear-gradient(90deg,#009a82 17px,#009a99 106px,#018c9a 149px,#69769a 204px,#9a6b9a 228px,#9a517c 245px,#9a3862 268px,#9a234a 301px,#9a0f35 350px,#9a0023 422px,#9a0014 550px,#9a000f 619px)"></i><i style="top:126px;background:linear-gradient(90deg,#009a85 18px,#00999a 101px,#00889a 149px,#68729a 205px,#9a679a 230px,#9a4d7d 247px,#9a3562 271px,#9a204a 305px,#9a0e34 355px,#9a0024 423px,#9a0014 550px,#9a0010 617px)"></i><i style="top:128px;background:linear-gradient(90deg,#009a88 19px,#00999a 89px,#01849a 150px,#696d9a 207px,#9a639a 232px,#9a497c 250px,#9a3262 274px,#9a1e4a 308px,#9a0c35 359px,#9a0025 422px,#9a0015 546px,#9a0010 615px)"></i><i style="top:130px;background:linear-gradient(90deg,#009a8c 19px,#00999a 77px,#01809a 150px,#686a9a 208px,#9a5f9a 234px,#9a467d 252px,#9a3062 277px,#9a1c4a 312px,#9a0a35 364px,#9a0027 421px,#9a0017 543px,#9a0011 613px)"></i><i style="top:132px;background:linear-gradient(90deg,#009a8f 20px,#00999a 66px,#007d9a 150px,#67669a 209px,#9a5b9a 236px,#9a437d 254px,#9a2e62 279px,#9a1a4a 315px,#9a0935 368px,#9a0028 420px,#9a0018 539px,#9a0012 611px)"></i><i style="top:134px;background:linear-gradient(90deg,#009a93 21px,#00999a 54px,#01799a 151px,#68629a 211px,#9a579a 238px,#9a407c 257px,#9a2a61 283px,#9a1849 320px,#9a0734 375px,#9a0029 419px,#9a0019 536px,#9a0013 609px)"></i><i style="top:136px;background:linear-gradient(90deg,#009a96 22px,#00989a 44px,#01769a 151px,#695e9a 213px,#9a539a 240px,#9a3d7d 259px,#9a2962 285px,#9a164a 322px,#9a0635 377px,#9a002b 418px,#9a001a 532px,#9a0013 608px)"></i><i style="top:138px;background:linear-gradient(90deg,#009a9a 22px,#00739a 151px,#685b9a 214px,#9a509a 242px,#9a3a7c 262px,#9a2661 289px,#9a1449 327px,#9a0434 384px,#9a002c 418px,#9a001b 531px,#9a0014 606px)"></i><i style="top:140px;background:linear-gradient(90deg,#00979a 23px,#016f9a 152px,#69589a 216px,#9a4d9a 244px,#9a377c 264px,#9a2462 291px,#9a124a 330px,#9a0334 388px,#9a002c 420px,#9a001b 533px,#9a0015 604px)"></i><i style="top:142px;background:linear-gradient(90deg,#00949a 24px,#016c9a 152px,#68559a 217px,#9a499a 246px,#9a357d 266px,#9a2262 294px,#9a114a 333px,#9a0235 391px,#9a002b 434px,#9a001a 555px,#9a0016 602px)"></i><i style="top:144px;background:linear-gradient(90deg,#00909a 25px,#006a9a 152px,#67529a 218px,#9a469a 248px,#9a327c 269px,#9a2062 297px,#9a0f4a 337px,#9a0134 397px,#9a0022 491px,#9a0017 600px)"></i><i style="top:146px;background:linear-gradient(90deg,#008d9a 25px,#01679a 153px,#6a4e9a 221px,#9a439a 250px,#9a307d 271px,#9a1d62 300px,#9a0d49 341px,#9a0034 402px,#9a0022 498px,#9a0017 598px)"></i><i style="top:148px;background:linear-gradient(90deg,#008a9a 26px,#01649a 153px,#694c9a 222px,#9a409a 252px,#9a2d7c 274px,#9a1b61 304px,#9a0b49 346px,#9a0035 402px,#9a0023 497px,#9a0018 596px)"></i><i style="top:150px;background:linear-gradient(90deg,#00879a 27px,#00619a 153px,#68499a 223px,#9a3e9a 254px,#9a2b7c 276px,#9a1a61 306px,#9a0a49 349px,#9a0037 401px,#9a0024 494px,#9a0019 594px)"></i><i style="top:152px;background:linear-gradient(90deg,#00849a 28px,#015f9a 154px,#69469a 225px,#9a3a99 257px,#9a287c 279px,#9a1761 310px,#9a0849 354px,#9a0039 400px,#9a0026 492px,#9a001a 592px)"></i><i style="top:154px;background:linear-gradient(90deg,#00819a 29px,#015c9a 154px,#68449a 226px,#9a3799 259px,#9a257b 282px,#9a1561 313px,#9a0749 357px,#9a003a 398px,#9a0027 487px,#9a001b 590px)"></i><i style="top:156px;background:linear-gradient(90deg,#007e9a 29px,#005a9a 154px,#67429a 227px,#9a3599 261px,#9a247b 284px,#9a1460 316px,#9a0649 361px,#9a003c 397px,#9a0029 484px,#9a001c 588px)"></i><i style="top:158px;background:linear-gradient(90deg,#007c9a 30px,#01589a 155px,#6a3f9a 230px,#9a3299 263px,#9a217b 287px,#9a1260 319px,#9a0448 365px,#9a003d 396px,#9a002a 482px,#9a001d 586px)"></i><i style="top:160px;background:linear-gradient(90deg,#00799a 31px,#01569a 155px,#693d9a 231px,#9a3099 265px,#9a1f7b 289px,#9a1060 322px,#9a0348 369px,#9a003e 398px,#9a002a 484px,#9a001d 584px)"></i><i style="top:162px;background:linear-gradient(90deg,#00769a 32px,#00539a 155px,#683a9a 232px,#9a2e99 267px,#9a1e7c 291px,#9a0f61 324px,#9a0249 371px,#9a003e 403px,#9a002a 491px,#9a001e 582px)"></i><i style="top:164px;background:linear-gradient(90deg,#00749a 33px,#01519a 156px,#69389a 234px,#9a2b99 269px,#9a1c7b 294px,#9a0d60 328px,#9a0148 376px,#9a0033 448px,#9a0021 562px,#9a001f 580px)"></i><i style="top:166px;background:linear-gradient(90deg,#00719a 34px,#014f9a 156px,#68369a 235px,#9a2999 271px,#9a1a7b 296px,#9a0c61 330px,#9a0049 379px,#9a0033 452px,#9a0021 567px,#9a0020 578px)"></i><i style="top:168px;background:linear-gradient(90deg,#006f9a 35px,#004d9a 156px,#69349a 237px,#9a2799 273px,#9a187c 298px,#9a0b61 333px,#9a0049 382px,#9a0034 455px,#9a0022 571px,#9a0021 576px)"></i><i style="top:170px;background:linear-gradient(90deg,#006d9a 35px,#014b9a 157px,#6a329a 239px,#9a2599 275px,#9a167b 301px,#9a0961 336px,#9a004b 381px,#9a0035 453px,#9a0023 566px,#9a0022 574px)"></i><i style="top:172px;background:linear-gradient(90deg,#006a9a 36px,#014a9a 157px,#69309a 240px,#9a2399 277px,#9a157c 303px,#9a0861 339px,#9a004d 379px,#9a0037 449px,#9a0024 559px,#9a0023 572px)"></i><i style="top:174px;background:linear-gradient(90deg,#00689a 37px,#00489a 157px,#682e9a 241px,#9a2199 279px,#9a147c 305px,#9a0761 341px,#9a004f 378px,#9a0039 447px,#9a0026 554px,#9a0024 570px)"></i><i style="top:176px;background:linear-gradient(90deg,#00669a 38px,#01469a 158px,#692c9a 243px,#9a1f99 281px,#9a127b 308px,#9a0661 345px,#9a0051 377px,#9a003a 445px,#9a0027 550px,#9a0025 569px)"></i><i style="top:178px;background:linear-gradient(90deg,#00649a 39px,#01449a 158px,#682a9a 244px,#9a1e99 283px,#9a107c 310px,#9a0561 347px,#9a0052 376px,#9a003c 443px,#9a0028 546px,#9a0026 567px)"></i><i style="top:180px;background:linear-gradient(90deg,#00629a 40px,#00439a 158px,#69299a 246px,#9a1c99 285px,#9a0f7b 313px,#9a0360 351px,#9a0053 377px,#9a003d 443px,#9a0029 545px,#9a0027 565px)"></i><i style="top:182px;background:linear-gradient(90deg,#00609a 41px,#01419a 159px,#69279a 248px,#9a1a99 287px,#9a0d7c 315px,#9a0261 353px,#9a0051 385px,#9a003b 455px,#9a0028 563px)"></i><i style="top:184px;background:linear-gradient(90deg,#005e9a 42px,#013f9a 159px,#69259a 249px,#9a1899 289px,#9a0c7c 317px,#9a0161 356px,#9a0049 411px,#9a0034 493px,#9a0029 561px)"></i><i style="top:186px;background:linear-gradient(90deg,#005c9a 43px,#013e9a 160px,#69239a 251px,#9a1799 291px,#9a0b7b 320px,#9a0061 359px,#9a0049 415px,#9a0034 498px,#9a002a 559px)"></i><i style="top:188px;background:linear-gradient(90deg,#005a9a 43px,#013c9a 160px,#69229a 252px,#9a1599 293px,#9a097c 322px,#9a0061 362px,#9a0049 419px,#9a0033 504px,#9a002b 557px)"></i><i style="top:190px;background:linear-gradient(90deg,#00589a 44px,#013b9a 160px,#68219a 253px,#9a149a 295px,#9a087c 324px,#9a0063 361px,#9a004a 417px,#9a0035 500px,#9a002c 555px)"></i><i style="top:192px;background:linear-gradient(90deg,#00569a 45px,#01399a 161px,#6a1f9a 256px,#9a129a 297px,#9a077c 327px,#9a0066 359px,#9a004d 413px,#9a0037 493px,#9a002d 553px)"></i><i style="top:194px;background:linear-gradient(90deg,#00559a 46px,#01389a 161px,#691d9a 257px,#9a119a 299px,#9a067c 329px,#9a0068 358px,#9a004f 411px,#9a0039 489px,#9a002e 551px)"></i><i style="top:196px;background:linear-gradient(90deg,#00539a 47px,#01379a 161px,#691c9a 258px,#9a0f9a 301px,#9a047b 332px,#9a006a 357px,#9a0051 409px,#9a003b 485px,#9a002f 549px)"></i><i style="top:198px;background:linear-gradient(90deg,#00519a 48px,#01359a 162px,#691b9a 260px,#9a0e9a 303px,#9a037c 334px,#9a006b 358px,#9a0052 410px,#9a003c 486px,#9a0030 547px)"></i><i style="top:200px;background:linear-gradient(90deg,#004f9a 49px,#01349a 162px,#69199a 261px,#9a0c9a 305px,#9a027c 336px,#9a006a 363px,#9a0051 417px,#9a003a 496px,#9a0031 545px)"></i><i style="top:202px;background:linear-gradient(90deg,#004e9a 50px,#01339a 162px,#69189a 263px,#9a0b9a 307px,#9a017c 339px,#9a0061 382px,#9a0049 444px,#9a0034 536px,#9a0032 543px)"></i><i style="top:204px;background:linear-gradient(90deg,#004c9a 51px,#01329a 163px,#6a169a 265px,#9a0a9a 309px,#9a007c 341px,#9a0061 385px,#9a0049 447px,#9a0034 540px,#9a0034 541px)"></i><i style="top:206px;background:linear-gradient(90deg,#004b9a 52px,#01309a 163px,#69159a 266px,#9a089a 311px,#9a007c 343px,#9a0061 387px,#9a0049 450px,#9a0035 539px)"></i><i style="top:208px;background:linear-gradient(90deg,#00499a 53px,#012f9a 163px,#69149a 267px,#9a079a 313px,#9a007e 343px,#9a0063 387px,#9a004a 449px,#9a0036 537px)"></i><i style="top:210px;background:linear-gradient(90deg,#00489a 54px,#012e9a 164px,#69139a 269px,#9a069a 315px,#9a0081 341px,#9a0066 384px,#9a004d 444px,#9a0037 533px,#9a0037 535px)"></i><i style="top:212px;background:linear-gradient(90deg,#00469a 55px,#012d9a 164px,#69129a 270px,#9a0499 318px,#9a0083 341px,#9a0068 383px,#9a004f 442px,#9a0039 529px,#9a0038 533px)"></i><i style="top:214px;background:linear-gradient(90deg,#00459a 56px,#012c9a 164px,#69109a 272px,#9a0399 320px,#9a0085 341px,#9a0069 383px,#9a0050 442px,#9a003a 528px,#9a0039 531px)"></i><i style="top:216px;background:linear-gradient(90deg,#00439a 57px,#012b9a 165px,#6a0f9a 274px,#9a0299 322px,#9a007f 351px,#9a0064 396px,#9a004b 460px,#9a003a 530px)"></i><i style="top:218px;background:linear-gradient(90deg,#00429a 58px,#012a9a 165px,#690e9a 275px,#9a0199 324px,#9a007b 359px,#9a0060 407px,#9a0048 475px,#9a003c 528px)"></i><i style="top:220px;background:linear-gradient(90deg,#00419a 59px,#01299a 165px,#690d9a 276px,#9a0099 326px,#9a007b 361px,#9a0060 409px,#9a0048 478px,#9a003d 526px)"></i><i style="top:222px;background:linear-gradient(90deg,#003f9a 60px,#01289a 166px,#690c9a 278px,#9a0099 328px,#9a007b 364px,#9a0060 413px,#9a0048 483px,#9a003e 524px)"></i><i style="top:224px;background:linear-gradient(90deg,#003e9a 61px,#01279a 166px,#690b9a 279px,#99009a 327px,#9a008d 343px,#9a0070 384px,#9a0056 441px,#9a0040 522px)"></i><i style="top:226px;background:linear-gradient(90deg,#003d9a 62px,#01269a 166px,#690a9a 281px,#95009a 325px,#9a0098 333px,#9a007a 370px,#9a005f 421px,#9a0047 493px,#9a0041 520px)"></i><i style="top:228px;background:linear-gradient(90deg,#003b9a 63px,#01259a 167px,#6a099a 283px,#92009a 324px,#9a0099 334px,#9a007b 371px,#9a0060 421px,#9a0048 493px,#9a0042 518px)"></i><i style="top:230px;background:linear-gradient(90deg,#003a9a 65px,#01249a 167px,#69089a 284px,#8e009a 322px,#9a0099 336px,#9a007b 373px,#9a0060 424px,#9a0048 496px,#9a0043 516px)"></i><i style="top:232px;background:linear-gradient(90deg,#00399a 66px,#01239a 167px,#69079a 285px,#8a009a 320px,#9a0099 338px,#9a007c 375px,#9a0061 426px,#9a0049 499px,#9a0045 514px)"></i><i style="top:234px;background:linear-gradient(90deg,#00379a 67px,#01229a 168px,#69069a 287px,#87009a 319px,#9a0099 340px,#9a007b 378px,#9a0060 430px,#9a0048 504px,#9a0046 512px)"></i><i style="top:236px;background:linear-gradient(90deg,#00369a 68px,#01219a 168px,#6a059a 289px,#85009a 318px,#9a0099 342px,#9a007b 380px,#9a0061 432px,#9a0049 506px,#9a0048 510px)"></i><i style="top:238px;background:linear-gradient(90deg,#00359a 69px,#01209a 168px,#69049a 290px,#82009a 317px,#9a0099 344px,#9a007b 383px,#9a0060 436px,#9a0049 508px)"></i><i style="top:240px;background:linear-gradient(90deg,#00349a 70px,#01209a 169px,#6a039a 292px,#80009a 317px,#9a0099 346px,#9a007b 385px,#9a0061 438px,#9a004a 506px)"></i><i style="top:242px;background:linear-gradient(90deg,#00339a 71px,#011f9a 169px,#69039a 293px,#81009a 319px,#9a0099 348px,#9a007c 387px,#9a0060 441px,#9a004c 504px)"></i><i style="top:244px;background:linear-gradient(90deg,#00329a 72px,#011e9a 169px,#69029a 294px,#94009a 342px,#9a0098 351px,#9a007b 391px,#9a0060 446px,#9a004d 502px)"></i><i style="top:246px;background:linear-gradient(90deg,#00319a 73px,#011d9a 170px,#69019a 296px,#9a0099 352px,#9a007b 392px,#9a0060 447px,#9a004f 500px)"></i><i style="top:248px;background:linear-gradient(90deg,#00309a 75px,#011c9a 170px,#6a009a 298px,#9a0099 354px,#9a007c 394px,#9a0061 449px,#9a0050 498px)"></i><i style="top:250px;background:linear-gradient(90deg,#002f9a 76px,#021b9a 171px,#6a009a 300px,#9a0099 356px,#9a007b 397px,#9a0060 453px,#9a0052 496px)"></i><i style="top:252px;background:linear-gradient(90deg,#002e9a 77px,#011b9a 171px,#69009a 300px,#9a0099 358px,#9a007c 399px,#9a0061 455px,#9a0053 494px)"></i><i style="top:254px;background:linear-gradient(90deg,#002d9a 78px,#011a9a 171px,#67009a 299px,#9a0099 360px,#9a007c 401px,#9a0061 458px,#9a0055 492px)"></i><i style="top:256px;background:linear-gradient(90deg,#002c9a 79px,#01199a 172px,#64009a 297px,#9a0099 362px,#9a007b 404px,#9a0061 461px,#9a0057 490px)"></i><i style="top:258px;background:linear-gradient(90deg,#002b9a 80px,#01199a 172px,#61009a 295px,#9a0099 364px,#9a007c 406px,#9a0061 464px,#9a0058 489px)"></i><i style="top:260px;background:linear-gradient(90deg,#002a9a 81px,#01189a 172px,#5e009a 293px,#9a0099 366px,#9a007b 409px,#9a0060 468px,#9a005a 487px)"></i><i style="top:262px;background:linear-gradient(90deg,#00289a 83px,#01179a 173px,#5b009a 291px,#9a0099 368px,#9a007c 411px,#9a0061 470px,#9a005b 485px)"></i><i style="top:264px;background:linear-gradient(90deg,#00289a 84px,#01179a 173px,#59009a 289px,#9a0099 370px,#9a007c 413px,#9a0061 472px,#9a005d 483px)"></i><i style="top:266px;background:linear-gradient(90deg,#00279a 85px,#01169a 173px,#56009a 287px,#9a0099 372px,#9a007b 416px,#9a0060 476px,#9a005f 481px)"></i><i style="top:268px;background:linear-gradient(90deg,#00269a 86px,#01159a 174px,#54009a 285px,#9a0099 374px,#9a007c 418px,#9a0061 478px,#9a0060 479px)"></i><i style="top:270px;background:linear-gradient(90deg,#00259a 87px,#01159a 174px,#52009a 284px,#9a009a 376px,#9a007c 420px,#9a0062 477px)"></i><i style="top:272px;background:linear-gradient(90deg,#00249a 89px,#01149a 174px,#4f009a 282px,#9a009a 378px,#9a007c 423px,#9a0064 475px)"></i><i style="top:274px;background:linear-gradient(90deg,#00239a 90px,#01139a 175px,#4d009a 280px,#9a0099 381px,#9a007b 426px,#9a0066 473px)"></i><i style="top:276px;background:linear-gradient(90deg,#00229a 91px,#01139a 175px,#4b009a 278px,#9a0099 383px,#9a007b 429px,#9a0068 471px)"></i><i style="top:278px;background:linear-gradient(90deg,#00219a 92px,#01129a 175px,#48009a 276px,#9a0099 385px,#9a007b 431px,#9a006a 469px)"></i><i style="top:280px;background:linear-gradient(90deg,#00219a 93px,#01119a 176px,#46009a 274px,#9a0099 387px,#9a007b 434px,#9a006b 467px)"></i><i style="top:282px;background:linear-gradient(90deg,#00209a 95px,#01119a 176px,#44009a 272px,#9a0099 389px,#9a007b 436px,#9a006d 465px)"></i><i style="top:284px;background:linear-gradient(90deg,#001f9a 96px,#01109a 176px,#41009a 270px,#9a0099 391px,#9a007b 438px,#9a006f 463px)"></i><i style="top:286px;background:linear-gradient(90deg,#001e9a 97px,#01109a 177px,#3f009a 268px,#9a0099 393px,#9a007b 441px,#9a0071 461px)"></i><i style="top:288px;background:linear-gradient(90deg,#001d9a 98px,#010f9a 177px,#3e009a 267px,#9a0099 395px,#9a007b 443px,#9a0073 459px)"></i><i style="top:290px;background:linear-gradient(90deg,#001d9a 99px,#010f9a 177px,#3c009a 265px,#9a0099 397px,#9a007b 445px,#9a0075 457px)"></i><i style="top:292px;background:linear-gradient(90deg,#001c9a 101px,#010e9a 178px,#3a009a 263px,#9a0099 399px,#9a007b 448px,#9a0078 455px)"></i><i style="top:294px;background:linear-gradient(90deg,#001b9a 102px,#010e9a 178px,#38009a 261px,#9a0099 401px,#9a007b 450px,#9a007a 453px)"></i><i style="top:296px;background:linear-gradient(90deg,#001a9a 103px,#010d9a 178px,#36009a 259px,#9a0099 403px,#9a007c 451px)"></i><i style="top:298px;background:linear-gradient(90deg,#00199a 104px,#010d9a 179px,#34009a 257px,#9a0099 405px,#9a007e 450px)"></i><i style="top:300px;background:linear-gradient(90deg,#00199a 106px,#010c9a 179px,#32009a 256px,#9a0099 407px,#9a0080 448px)"></i><i style="top:302px;background:linear-gradient(90deg,#00189a 107px,#010c9a 179px,#31009a 254px,#9a0099 409px,#9a0082 446px)"></i><i style="top:304px;background:linear-gradient(90deg,#00179a 108px,#010b9a 180px,#2f009a 252px,#99009a 407px,#9a008c 431px,#9a0084 444px)"></i><i style="top:306px;background:linear-gradient(90deg,#00179a 109px,#010b9a 180px,#2d009a 250px,#96009a 406px,#9a0098 415px,#9a0087 442px)"></i><i style="top:308px;background:linear-gradient(90deg,#00169a 111px,#020a9a 181px,#2b009a 248px,#94009a 405px,#9a0098 416px,#9a0089 440px)"></i><i style="top:310px;background:linear-gradient(90deg,#00159a 112px,#010a9a 181px,#29009a 246px,#93009a 405px,#9a0098 418px,#9a008c 438px)"></i><i style="top:312px;background:linear-gradient(90deg,#00149a 113px,#01099a 181px,#28009a 245px,#92009a 405px,#9a0098 420px,#9a008e 436px)"></i><i style="top:314px;background:linear-gradient(90deg,#00149a 115px,#02099a 182px,#26009a 243px,#90009a 404px,#9a0099 422px,#9a0091 434px)"></i><i style="top:316px;background:linear-gradient(90deg,#00139a 116px,#01089a 182px,#25009a 241px,#8e009a 404px,#9a0099 424px,#9a0093 432px)"></i><i style="top:318px;background:linear-gradient(90deg,#00129a 117px,#01089a 182px,#23009a 239px,#8c009a 403px,#9a0099 426px,#9a0096 430px)"></i><i style="top:320px;background:linear-gradient(90deg,#00129a 119px,#02079a 183px,#22009a 238px,#8b009a 403px,#9a0099 428px)"></i><i style="top:322px;background:linear-gradient(90deg,#00119a 120px,#01079a 183px,#20009a 236px,#8a009a 403px,#99009a 426px)"></i><i style="top:324px;background:linear-gradient(90deg,#00109a 121px,#01079a 183px,#1f009a 234px,#88009a 402px,#97009a 424px)"></i><i style="top:326px;background:linear-gradient(90deg,#00109a 123px,#01069a 184px,#1e009a 233px,#87009a 402px,#94009a 422px)"></i><i style="top:328px;background:linear-gradient(90deg,#000f9a 124px,#01069a 184px,#1c009a 231px,#85009a 402px,#91009a 420px)"></i><i style="top:330px;background:linear-gradient(90deg,#000f9a 125px,#01059a 184px,#1b009a 229px,#84009a 401px,#8f009a 418px)"></i><i style="top:332px;background:linear-gradient(90deg,#000e9a 127px,#01059a 185px,#1a009a 228px,#83009a 401px,#8c009a 416px)"></i><i style="top:334px;background:linear-gradient(90deg,#000d9a 128px,#01049a 185px,#19009a 227px,#82009a 402px,#8a009a 414px)"></i><i style="top:336px;background:linear-gradient(90deg,#000d9a 129px,#01049a 185px,#17009a 225px,#80009a 401px,#87009a 412px)"></i><i style="top:338px;background:linear-gradient(90deg,#000c9a 131px,#01049a 186px,#17009a 225px,#80009a 402px,#85009a 411px)"></i><i style="top:340px;background:linear-gradient(90deg,#000c9a 132px,#01039a 186px,#16009a 224px,#7f009a 403px,#83009a 409px)"></i><i style="top:342px;background:linear-gradient(90deg,#000b9a 134px,#01039a 186px,#16009a 224px,#7f009a 404px,#81009a 407px)"></i><i style="top:344px;background:linear-gradient(90deg,#000a9a 135px,#01029a 187px,#18009a 228px,#7e009a 405px)"></i><i style="top:346px;background:linear-gradient(90deg,#000a9a 136px,#01029a 187px,#1b009a 234px,#7c009a 403px)"></i><i style="top:348px;background:linear-gradient(90deg,#00099a 138px,#02029a 188px,#36009a 285px,#7a009a 401px)"></i><i style="top:350px;background:linear-gradient(90deg,#00099a 139px,#01019a 188px,#6a009a 376px,#78009a 399px)"></i><i style="top:352px;background:linear-gradient(90deg,#00089a 141px,#01019a 188px,#6a009a 377px,#76009a 397px)"></i><i style="top:354px;background:linear-gradient(90deg,#00089a 142px,#02019a 189px,#6a009a 379px,#73009a 395px)"></i><i style="top:356px;background:linear-gradient(90deg,#00079a 144px,#01009a 189px,#6a009a 380px,#71009a 393px)"></i><i style="top:358px;background:linear-gradient(90deg,#00069a 145px,#01009a 189px,#69009a 381px,#6f009a 391px)"></i><i style="top:360px;background:linear-gradient(90deg,#00069a 147px,#02009a 190px,#6a009a 383px,#6d009a 389px)"></i><i style="top:362px;background:linear-gradient(90deg,#00059a 148px,#01009a 190px,#6a009a 385px,#6b009a 387px)"></i><i style="top:364px;background:linear-gradient(90deg,#00059a 150px,#01009a 190px,#69009a 385px)"></i><i style="top:366px;background:linear-gradient(90deg,#00049a 151px,#02009a 191px,#67009a 383px)"></i><i style="top:368px;background:linear-gradient(90deg,#00049a 153px,#01009a 191px,#65009a 381px)"></i><i style="top:370px;background:linear-gradient(90deg,#00039a 154px,#01009a 191px,#63009a 379px)"></i><i style="top:372px;background:linear-gradient(90deg,#00039a 156px,#02009a 192px,#61009a 377px)"></i><i style="top:374px;background:linear-gradient(90deg,#00029a 158px,#01009a 192px,#60009a 375px)"></i><i style="top:376px;background:linear-gradient(90deg,#00029a 159px,#01009a 192px,#5e009a 373px)"></i><i style="top:378px;background:linear-gradient(90deg,#00019a 161px,#02009a 193px,#5c009a 372px)"></i><i style="top:380px;background:linear-gradient(90deg,#00019a 162px,#01009a 193px,#5b009a 370px)"></i><i style="top:382px;background:linear-gradient(90deg,#00009a 164px,#02009a 194px,#59009a 368px)"></i><i style="top:384px;background:linear-gradient(90deg,#00009a 166px,#02009a 194px,#57009a 366px)"></i><i style="top:386px;background:linear-gradient(90deg,#00009a 167px,#01009a 194px,#55009a 364px)"></i><i style="top:388px;background:linear-gradient(90deg,#00009a 169px,#02009a 195px,#54009a 362px)"></i><i style="top:390px;background:linear-gradient(90deg,#00009a 171px,#02009a 195px,#52009a 360px)"></i><i style="top:392px;background:linear-gradient(90deg,#00009a 172px,#01009a 195px,#50009a 358px)"></i><i style="top:394px;background:linear-gradient(90deg,#00009a 174px,#02009a 196px,#4f009a 356px)"></i><i style="top:396px;background:linear-gradient(90deg,#00009a 176px,#02009a 197px,#4d009a 354px)"></i><i style="top:398px;background:linear-gradient(90deg,#00009a 178px,#02009a 197px,#4c009a 352px)"></i><i style="top:400px;background:linear-gradient(90deg,#00009a 180px,#02009a 197px,#4a009a 350px)"></i><i style="top:402px;background:linear-gradient(90deg,#00009a 181px,#02009a 198px,#48009a 348px)"></i><i style="top:404px;background:linear-gradient(90deg,#00009a 183px,#02009a 198px,#47009a 346px)"></i><i style="top:406px;background:linear-gradient(90deg,#00009a 185px,#02009a 199px,#45009a 344px)"></i><i style="top:408px;background:linear-gradient(90deg,#00009a 187px,#03009a 201px,#44009a 342px)"></i><i style="top:410px;background:linear-gradient(90deg,#00009a 189px,#03009a 202px,#42009a 340px)"></i><i style="top:412px;background:linear-gradient(90deg,#00009a 191px,#08009a 213px,#41009a 338px)"></i><i style="top:414px;background:linear-gradient(90deg,#00009a 193px,#40009a 336px)"></i><i style="top:416px;background:linear-gradient(90deg,#00009a 195px,#3e009a 334px)"></i><i style="top:418px;background:linear-gradient(90deg,#00009a 197px,#3d009a 333px)"></i><i style="top:420px;background:linear-gradient(90deg,#01009a 199px,#3c009a 331px)"></i><i style="top:422px;background:linear-gradient(90deg,#02009a 202px,#3a009a 329px)"></i><i style="top:424px;background:linear-gradient(90deg,#03009a 204px,#39009a 327px)"></i><i style="top:426px;background:linear-gradient(90deg,#04009a 206px,#38009a 325px)"></i><i style="top:428px;background:linear-gradient(90deg,#04009a 208px,#36009a 323px)"></i><i style="top:430px;background:linear-gradient(90deg,#05009a 210px,#35009a 321px)"></i><i style="top:432px;background:linear-gradient(90deg,#06009a 213px,#34009a 319px)"></i><i style="top:434px;background:linear-gradient(90deg,#07009a 215px,#32009a 317px)"></i><i style="top:436px;background:linear-gradient(90deg,#08009a 218px,#31009a 315px)"></i><i style="top:438px;background:linear-gradient(90deg,#08009a 220px,#30009a 313px)"></i><i style="top:440px;background:linear-gradient(90deg,#0a009a 223px,#2f009a 311px)"></i><i style="top:442px;background:linear-gradient(90deg,#0a009a 225px,#2d009a 309px)"></i><i style="top:444px;background:linear-gradient(90deg,#0b009a 227px,#2c009a 307px)"></i><i style="top:446px;background:linear-gradient(90deg,#0c009a 230px,#2b009a 305px)"></i><i style="top:448px;background:linear-gradient(90deg,#0c009a 232px,#2a009a 303px)"></i><i style="top:450px;background:linear-gradient(90deg,#0d009a 235px,#29009a 301px)"></i><i style="top:452px;background:linear-gradient(90deg,#0e009a 237px,#28009a 299px)"></i><i style="top:454px;background:linear-gradient(90deg,#0f009a 240px,#26009a 297px)"></i><i style="top:456px;background:linear-gradient(90deg,#10009a 242px,#25009a 295px)"></i><i style="top:458px;background:linear-gradient(90deg,#11009a 245px,#24009a 293px)"></i><i style="top:460px;background:linear-gradient(90deg,#11009a 247px,#23009a 292px)"></i><i style="top:462px;background:linear-gradient(90deg,#12009a 250px,#22009a 290px)"></i><i style="top:464px;background:linear-gradient(90deg,#13009a 252px,#21009a 288px)"></i><i style="top:466px;background:linear-gradient(90deg,#14009a 255px,#20009a 286px)"></i><i style="top:468px;background:linear-gradient(90deg,#14009a 257px,#1f009a 284px)"></i><i style="top:470px;background:linear-gradient(90deg,#15009a 260px,#1e009a 282px)"></i><i style="top:472px;background:linear-gradient(90deg,#16009a 262px,#1d009a 280px)"></i><i style="top:474px;background:linear-gradient(90deg,#16009a 264px,#1c009a 278px)"></i><i style="top:476px;background:linear-gradient(90deg,#17009a 267px,#1b009a 276px)"></i></div><div class="cie" style="clip-path:polygon(479.8px 63.6px,133.3px 31.3px,187.0px 361.5px)"><i style="top:30px;background:linear-gradient(90deg,#0f0 132px,#04ff00 135px,#15ff00 142px)"></i><i style="top:32px;background:linear-gradient(90deg,#00ff04 132px,#03ff03 135px,#4eff00 164px)"></i><i style="top:34px;background:linear-gradient(90deg,#00ff08 132px,#00ff08 134px,#4bff02 163px,#8cff00 185px)"></i><i style="top:36px;background:linear-gradient(90deg,#00ff0d 133px,#04ff0c 136px,#4dff07 164px,#99ff01 189px,#d7ff00 207px)"></i><i style="top:38px;background:linear-gradient(90deg,#0f1 133px,#03ff11 136px,#4dff0c 164px,#99ff07 189px,#e6ff01 211px,#feff00 217px,#ffd900 228px)"></i><i style="top:40px;background:linear-gradient(90deg,#00ff16 133px,#00ff15 135px,#49ff11 163px,#95ff0c 188px,#e3ff07 210px,#ffff05 217px,#ffd302 230px,#ffac00 245px,#ffa100 250px)"></i><i style="top:42px;background:linear-gradient(90deg,#00ff1a 134px,#04ff1a 137px,#4fff16 165px,#9f1 189px,#e8ff0d 211px,#ffff0b 217px,#ffd507 229px,#ffad03 244px,#ff8900 263px,#ff7c00 271px)"></i><i style="top:44px;background:linear-gradient(90deg,#00ff1f 134px,#04ff1f 137px,#4bff1b 164px,#95ff17 188px,#e4ff13 210px,#fffe11 217px,#ffd40c 229px,#ffac07 244px,#ff8803 263px,#ff6700 287px,#ff6100 292px)"></i><i style="top:46px;background:linear-gradient(90deg,#00ff24 134px,#00ff23 136px,#48ff20 163px,#92ff1d 187px,#e1ff19 209px,#fdff18 216px,#fff917 218px,#ffd011 230px,#ffa90c 245px,#ff8507 264px,#ff6502 288px,#ff4b00 314px)"></i><i style="top:48px;background:linear-gradient(90deg,#00ff28 135px,#02ff28 137px,#4aff25 164px,#96ff22 188px,#e5ff1f 210px,#feff1e 216px,#ffcf16 230px,#ffa910 245px,#ff850a 264px,#ff6405 288px,#ff4600 320px,#ff3b00 335px)"></i><i style="top:50px;background:linear-gradient(90deg,#00ff2d 135px,#04ff2d 138px,#4dff2a 165px,#99ff27 189px,#e6ff25 210px,#feff24 216px,#ffd11c 229px,#ffaa15 244px,#ff850e 263px,#ff6408 287px,#ff4603 319px,#ff2d00 357px)"></i><i style="top:52px;background:linear-gradient(90deg,#00ff32 135px,#00ff32 137px,#4aff30 164px,#96ff2d 188px,#e3ff2b 209px,#ffff2a 216px,#ffd722 227px,#ffb01b 241px,#ff8b13 259px,#ff6a0d 282px,#ff4b07 312px,#ff2f01 353px,#f20 378px)"></i><i style="top:54px;background:linear-gradient(90deg,#00ff37 135px,#02ff37 138px,#4cff35 165px,#9f3 189px,#e7ff31 210px,#fffe30 216px,#ffd628 227px,#ffaf1f 241px,#ff8b17 259px,#ff6910 282px,#ff4a0a 312px,#ff2e04 353px,#ff1900 400px)"></i><i style="top:56px;background:linear-gradient(90deg,#00ff3c 136px,#04ff3c 139px,#4cff3a 165px,#96ff39 188px,#e4ff37 209px,#fffd37 216px,#ffd52d 227px,#ffae24 241px,#ff8a1b 259px,#ff6813 282px,#ff4a0c 312px,#ff2e06 353px,#ff1500 410px,#f10 421px)"></i><i style="top:58px;background:linear-gradient(90deg,#00ff41 136px,#01ff41 138px,#48ff40 164px,#92ff3f 187px,#e0ff3e 208px,#fdff3e 215px,#ffe938 221px,#ffc22e 233px,#ff9c24 249px,#ff791b 269px,#ff5913 295px,#ff3b0c 330px,#ff2105 378px,#ff0a00 442px)"></i><i style="top:60px;background:linear-gradient(90deg,#00ff46 136px,#02ff46 139px,#4bff46 165px,#96ff45 188px,#e5ff44 209px,#feff44 215px,#ffd037 228px,#ffaa2d 242px,#ff8623 260px,#ff651a 283px,#ff4611 314px,#ff2b0a 356px,#ff1203 415px,#ff0400 464px)"></i><i style="top:62px;background:linear-gradient(90deg,#00ff4b 137px,#04ff4b 140px,#4dff4b 166px,#99ff4b 189px,#e6ff4b 209px,#ffff4b 215px,#ffd63f 226px,#ffae33 240px,#ff8b29 257px,#ff691f 279px,#ff4b16 308px,#ff2f0d 348px,#ff1506 404px,#f00 481px)"></i><i style="top:64px;background:linear-gradient(90deg,#00ff51 137px,#01ff51 139px,#4aff51 165px,#96ff51 188px,#e2ff52 208px,#fffe51 215px,#ffd544 226px,#ffad38 240px,#ff8a2d 257px,#ff6922 279px,#ff4a18 308px,#ff2e10 348px,#ff1508 404px,#ff0001 480px,#ff0001 481px)"></i><i style="top:66px;background:linear-gradient(90deg,#00ff56 137px,#00ff56 139px,#46ff57 164px,#92ff57 187px,#dfff58 207px,#fffe58 215px,#ffd44a 226px,#ffad3d 240px,#ff8931 257px,#ff6826 279px,#ff491b 308px,#ff2d12 348px,#ff1409 404px,#ff0002 478px,#ff0002 479px)"></i><i style="top:68px;background:linear-gradient(90deg,#00ff5b 138px,#04ff5b 141px,#4cff5d 166px,#99ff5e 189px,#e7ff5f 209px,#fdff60 214px,#fff45c 217px,#ffcd4e 228px,#ffa740 242px,#ff8333 260px,#ff6227 283px,#ff441c 314px,#ff2813 356px,#ff100a 415px,#ff0004 477px)"></i><i style="top:70px;background:linear-gradient(90deg,#00ff61 138px,#01ff61 140px,#49ff63 165px,#92ff64 187px,#e0ff66 207px,#feff67 214px,#ffcf55 227px,#ffa846 241px,#ff8438 259px,#ff632b 282px,#ff4520 312px,#ff2915 353px,#ff110c 411px,#ff0006 475px)"></i><i style="top:72px;background:linear-gradient(90deg,#0f6 138px,#00ff67 140px,#45ff69 164px,#8fff6b 186px,#dcff6d 206px,#ffff6e 214px,#ffd25c 226px,#ffaa4c 240px,#ff863d 257px,#ff6630 279px,#ff4724 308px,#ff2b19 348px,#ff130f 404px,#ff0007 473px)"></i><i style="top:74px;background:linear-gradient(90deg,#00ff6c 139px,#04ff6c 142px,#4eff6f 167px,#9aff72 189px,#e9ff74 209px,#ffff75 214px,#ffd463 225px,#ffae53 238px,#ff8943 255px,#ff6735 277px,#ff4828 306px,#ff2c1c 345px,#ff1311 400px,#ff0009 471px)"></i><i style="top:76px;background:linear-gradient(90deg,#00ff72 139px,#01ff72 141px,#4aff75 166px,#96ff78 188px,#e6ff7c 208px,#fffe7c 214px,#ffd369 225px,#ffad58 238px,#ff8848 255px,#ff6638 277px,#ff482b 306px,#ff2c1e 345px,#ff1313 400px,#ff000a 469px)"></i><i style="top:78px;background:linear-gradient(90deg,#00ff78 139px,#00ff78 141px,#47ff7b 165px,#92ff7f 187px,#e2ff83 207px,#fdff84 213px,#fff981 215px,#ffcf6d 226px,#ffaa5c 239px,#ff864b 256px,#ff643b 278px,#ff462d 307px,#ff2b20 346px,#ff1215 401px,#ff000c 467px)"></i><i style="top:80px;background:linear-gradient(90deg,#00ff7d 140px,#04ff7e 143px,#4dff82 167px,#9aff86 189px,#e7ff8a 208px,#fdff8c 213px,#ffce74 226px,#ffa961 239px,#ff854f 256px,#ff643f 278px,#ff4530 307px,#ff2a23 346px,#ff1117 402px,#ff000e 465px)"></i><i style="top:82px;background:linear-gradient(90deg,#00ff83 140px,#01ff84 142px,#49ff88 166px,#96ff8d 188px,#e3ff92 207px,#feff93 213px,#ffd07b 225px,#ffaa68 238px,#ff8655 255px,#ff6443 277px,#ff4534 306px,#ff2a25 345px,#ff1119 400px,#ff0010 463px)"></i><i style="top:84px;background:linear-gradient(90deg,#00ff89 140px,#00ff8a 142px,#48ff8f 166px,#92ff94 187px,#e0ff99 206px,#ffff9b 213px,#ffd685 223px,#ffaf70 236px,#ff8a5c 252px,#ff684a 273px,#ff4a3a 300px,#ff2e2a 337px,#ff151d 389px,#f01 460px,#f01 461px)"></i><i style="top:86px;background:linear-gradient(90deg,#00ff90 141px,#02ff90 143px,#4bff96 167px,#96ff9b 188px,#e5ffa1 207px,#fffea3 213px,#ffd58c 223px,#ffae75 236px,#ff8961 252px,#ff684e 273px,#ff493d 300px,#ff2d2d 337px,#ff141f 389px,#ff0013 458px,#ff0013 459px)"></i><i style="top:88px;background:linear-gradient(90deg,#00ff96 141px,#01ff96 143px,#4bff9c 167px,#96ffa3 188px,#e5ffa9 207px,#fcffab 212px,#fff9a8 214px,#ffd190 224px,#ffaa79 237px,#ff8764 253px,#ff6551 274px,#ff473f 302px,#ff2b2e 340px,#ff1220 393px,#ff0015 457px)"></i><i style="top:90px;background:linear-gradient(90deg,#00ff9c 141px,#00ff9d 143px,#4affa3 167px,#96ffaa 188px,#e6ffb1 207px,#fdffb3 212px,#ffefaa 216px,#ffc690 227px,#ff9f79 241px,#ff7d64 258px,#ff5d50 280px,#ff3f3e 310px,#ff242d 351px,#ff0c1e 409px,#ff0017 455px)"></i><i style="top:92px;background:linear-gradient(90deg,#00ffa3 142px,#02ffa3 144px,#4affaa 167px,#96ffb2 188px,#e2ffb9 206px,#feffbc 212px,#ffcf9d 224px,#ffa884 237px,#ff856e 253px,#ff6459 274px,#ff4545 302px,#ff2a33 340px,#ff1124 393px,#ff0019 453px)"></i><i style="top:94px;background:linear-gradient(90deg,#00ffa9 142px,#01ffaa 144px,#49ffb1 167px,#96ffb9 188px,#e3ffc1 206px,#ffffc4 212px,#ffd5a8 222px,#ffaf8f 234px,#ff8c78 249px,#ff6a61 269px,#ff4b4d 295px,#ff2f3a 330px,#ff1629 379px,#ff001b 449px,#ff001a 451px)"></i><i style="top:96px;background:linear-gradient(90deg,#00ffb0 142px,#00ffb0 144px,#49ffb8 167px,#92ffc1 187px,#dfffc9 205px,#fffecc 212px,#ffd4af 222px,#ffae95 234px,#ff8b7d 249px,#ff6965 269px,#ff4a50 295px,#ff2e3d 330px,#ff152b 379px,#ff001c 448px,#ff001c 450px)"></i><i style="top:98px;background:linear-gradient(90deg,#00ffb6 143px,#02ffb7 145px,#4cffc0 168px,#96ffc9 188px,#e4ffd2 206px,#fffdd4 212px,#ffd3b6 222px,#ffad9b 234px,#ff8a81 249px,#ff6869 269px,#ff4953 295px,#ff2e3f 330px,#ff152d 379px,#ff001e 446px,#ff001e 448px)"></i><i style="top:100px;background:linear-gradient(90deg,#00ffbd 143px,#01ffbe 145px,#4bffc7 168px,#96ffd1 188px,#e5ffdb 206px,#fdffde 211px,#fff8d9 213px,#ffcfba 223px,#ffa99f 235px,#ff8583 251px,#ff646b 271px,#ff4654 298px,#ff2a40 334px,#ff122e 385px,#ff0020 446px)"></i><i style="top:102px;background:linear-gradient(90deg,#00ffc4 143px,#00ffc5 145px,#47ffce 167px,#92ffd9 187px,#e1ffe3 205px,#feffe7 211px,#ffcec1 223px,#ffa8a5 235px,#ff8488 251px,#ff636f 271px,#ff4558 298px,#ff2942 335px,#ff102f 387px,#f02 444px)"></i><i style="top:104px;background:linear-gradient(90deg,#00ffcb 144px,#02ffcc 146px,#4affd6 168px,#96ffe1 188px,#e6ffed 206px,#fffff0 211px,#ffd4ce 221px,#ffadaf 233px,#ff8992 248px,#ff6878 267px,#ff4a60 292px,#ff2e49 326px,#ff1535 374px,#ff0024 440px,#ff0024 442px)"></i><i style="top:106px;background:linear-gradient(90deg,#00ffd2 144px,#01ffd3 146px,#4affde 168px,#96ffea 188px,#e2fff5 205px,#fffff9 211px,#ffd7d8 220px,#ffafb7 232px,#ff8a99 247px,#ff697d 266px,#ff4a64 291px,#ff2e4d 325px,#ff1538 373px,#ff0027 438px,#ff0026 440px)"></i><i style="top:108px;background:linear-gradient(90deg,#00ffd9 144px,#00ffda 146px,#49ffe6 168px,#92fff2 187px,#defffe 204px,#fff9fe 212px,#ffced9 222px,#ffa8b9 234px,#ff859b 249px,#ff637e 269px,#ff4564 295px,#ff2a4d 330px,#ff1138 380px,#ff0028 438px)"></i><i style="top:110px;background:linear-gradient(90deg,#00ffe1 145px,#02ffe2 147px,#4cffee 169px,#96fffb 188px,#bcfcff 197px,#ffeefe 214px,#ffc6da 224px,#ffa2ba 236px,#ff7e9b 252px,#ff5d7d 273px,#ff4063 300px,#ff254c 337px,#ff0d36 390px,#ff002a 436px)"></i><i style="top:112px;background:linear-gradient(90deg,#00ffe8 145px,#01ffe9 147px,#4cfff7 169px,#85fdff 184px,#ffe4fe 216px,#ffbedb 226px,#ff99b9 239px,#ff7699 256px,#ff567c 278px,#ff3961 307px,#ff1f49 347px,#ff0734 405px,#ff002c 434px)"></i><i style="top:114px;background:linear-gradient(90deg,#00fff0 145px,#00fff1 147px,#47fffe 168px,#d2e5ff 206px,#ffdbfe 218px,#ffb4d9 229px,#ff8fb6 243px,#ff6d96 261px,#ff4e79 284px,#ff325f 315px,#ff1846 359px,#ff0231 423px,#ff002f 432px)"></i><i style="top:116px;background:linear-gradient(90deg,#00fff8 146px,#02fff9 148px,#2afdff 160px,#aee3ff 198px,#ffd2fe 220px,#ffacda 231px,#ff89b7 245px,#ff6897 263px,#ff4a7a 287px,#ff2e5e 320px,#ff1546 366px,#ff0031 428px,#ff0031 430px)"></i><i style="top:118px;background:linear-gradient(90deg,#00feff 146px,#01fdff 148px,#86e2ff 188px,#ffc9fe 222px,#ffa3d8 234px,#ff80b5 249px,#ff5f93 269px,#ff4175 295px,#ff265a 331px,#ff0e42 382px,#f03 428px)"></i><i style="top:120px;background:linear-gradient(90deg,#00f7ff 146px,#00f6ff 148px,#85dbff 189px,#ffc1fe 224px,#ff9dd9 236px,#ff7bb6 251px,#ff5b95 271px,#ff3e77 297px,#ff245b 333px,#ff0c43 384px,#ff0035 426px)"></i><i style="top:122px;background:linear-gradient(90deg,#00efff 147px,#02eeff 149px,#87d2ff 191px,#ffb9fe 226px,#ff96d9 238px,#ff74b5 254px,#ff5695 274px,#ff3a77 301px,#ff205b 338px,#ff0a43 390px,#ff0038 424px)"></i><i style="top:124px;background:linear-gradient(90deg,#00e8ff 147px,#01e7ff 149px,#87cbff 192px,#ffb1fe 228px,#ff8ed7 241px,#ff6eb4 257px,#ff5094 278px,#ff3575 306px,#ff1c5a 344px,#ff0642 398px,#ff003a 422px)"></i><i style="top:126px;background:linear-gradient(90deg,#00e2ff 147px,#00e1ff 149px,#86c4ff 193px,#ffaafe 230px,#ff88d8 243px,#ff6ab6 259px,#ff4d95 280px,#f37 308px,#ff1b5c 346px,#ff0543 400px,#ff003d 420px)"></i><i style="top:128px;background:linear-gradient(90deg,#00dbff 148px,#02daff 150px,#88bdff 195px,#ffa3fe 232px,#ff83d9 245px,#ff64b5 262px,#ff4894 284px,#ff2e76 313px,#ff175a 353px,#ff0242 409px,#ff003f 418px)"></i><i style="top:130px;background:linear-gradient(90deg,#00d5ff 148px,#04d3ff 151px,#87b7ff 196px,#ff9cff 234px,#ff7eda 247px,#ff60b6 264px,#ff4595 286px,#ff2c77 315px,#ff155c 355px,#ff0143 411px,#ff0042 416px)"></i><i style="top:132px;background:linear-gradient(90deg,#00cfff 148px,#00ceff 150px,#86b1ff 197px,#ff96ff 236px,#ff77d8 250px,#ff59b4 268px,#ff3f93 291px,#ff2775 321px,#ff115a 362px,#f04 414px)"></i><i style="top:134px;background:linear-gradient(90deg,#00c9ff 148px,#00c8ff 150px,#7aadff 194px,#ff90ff 238px,#ff72d9 252px,#ff56b5 270px,#ff3c94 293px,#ff2476 324px,#ff0f5a 366px,#ff0047 412px)"></i><i style="top:136px;background:linear-gradient(90deg,#00c4ff 149px,#04c2ff 152px,#88a5ff 200px,#ff8aff 240px,#ff6dd9 254px,#ff52b6 272px,#ff3995 295px,#f27 326px,#ff0d5c 368px,#ff0049 410px)"></i><i style="top:138px;background:linear-gradient(90deg,#00beff 149px,#00bdff 151px,#84a0ff 200px,#ff84ff 242px,#ff67d8 257px,#ff4cb4 276px,#ff3493 300px,#ff1e75 332px,#ff0a5a 376px,#ff004c 408px)"></i><i style="top:140px;background:linear-gradient(90deg,#00b9ff 149px,#02b8ff 152px,#869aff 202px,#ff7fff 244px,#ff63d8 259px,#ff49b5 278px,#ff3294 302px,#ff1c76 334px,#ff085b 378px,#ff004f 406px)"></i><i style="top:142px;background:linear-gradient(90deg,#00b4ff 150px,#04b2ff 153px,#8894ff 204px,#ff79ff 246px,#ff5fd9 261px,#ff46b6 280px,#ff2e94 305px,#ff1976 338px,#ff065b 383px,#ff0052 404px)"></i><i style="top:144px;background:linear-gradient(90deg,#00b0ff 150px,#03aeff 153px,#888fff 205px,#ff74ff 248px,#ff5bda 263px,#ff43b7 282px,#ff2c96 307px,#ff1777 340px,#ff055c 385px,#ff0054 402px)"></i><i style="top:146px;background:linear-gradient(90deg,#00abff 150px,#02a9ff 153px,#878bff 206px,#ff6fff 250px,#ff55d8 266px,#ff3db4 286px,#ff2894 312px,#ff1476 346px,#ff015a 393px,#ff0057 400px)"></i><i style="top:148px;background:linear-gradient(90deg,#00a6ff 151px,#04a5ff 154px,#8986ff 208px,#ff6aff 252px,#ff51d9 268px,#ff3bb5 288px,#ff2595 314px,#ff1276 349px,#ff005b 396px,#ff005a 398px)"></i><i style="top:150px;background:linear-gradient(90deg,#00a2ff 151px,#03a1ff 154px,#8881ff 209px,#f6f 254px,#ff4dd7 271px,#ff36b3 292px,#ff2193 319px,#ff0e75 355px,#ff005d 396px)"></i><i style="top:152px;background:linear-gradient(90deg,#009eff 151px,#029dff 154px,#887dff 210px,#ff61ff 256px,#ff49d8 273px,#ff33b4 294px,#ff1f94 321px,#ff0d76 357px,#ff0060 394px)"></i><i style="top:154px;background:linear-gradient(90deg,#009aff 152px,#0498ff 155px,#8979ff 212px,#ff5dff 258px,#ff46d8 275px,#ff31b5 296px,#ff1c94 324px,#ff0a76 361px,#ff0063 392px)"></i><i style="top:156px;background:linear-gradient(90deg,#0096ff 152px,#0394ff 155px,#8975ff 213px,#ff59ff 260px,#ff41d7 278px,#ff2cb3 300px,#ff1993 328px,#ff0875 366px,#f06 391px)"></i><i style="top:158px;background:linear-gradient(90deg,#0092ff 152px,#0291ff 155px,#8671ff 213px,#ff54ff 262px,#ff3ed8 280px,#ff2ab4 302px,#ff1793 331px,#ff0675 369px,#ff0069 389px)"></i><i style="top:160px;background:linear-gradient(90deg,#008eff 153px,#068cff 157px,#8a6dff 216px,#ff51ff 264px,#ff3ad6 283px,#ff26b2 306px,#ff1391 336px,#ff0374 375px,#ff006d 387px)"></i><i style="top:162px;background:linear-gradient(90deg,#008bff 153px,#0389ff 156px,#876aff 216px,#ff4dff 266px,#ff37d7 285px,#ff24b3 308px,#ff1292 338px,#ff0174 378px,#ff0070 385px)"></i><i style="top:164px;background:linear-gradient(90deg,#08f 153px,#0286ff 156px,#8666ff 217px,#ff49ff 268px,#ff34d7 287px,#ff21b4 310px,#ff1093 340px,#ff0075 380px,#ff0073 383px)"></i><i style="top:166px;background:linear-gradient(90deg,#0084ff 154px,#0582ff 158px,#8a62ff 220px,#ff45ff 270px,#ff30d6 290px,#ff1eb2 314px,#ff0d92 345px,#f07 381px)"></i><i style="top:168px;background:linear-gradient(90deg,#0081ff 154px,#037fff 157px,#875fff 220px,#ff42ff 272px,#ff2dd7 292px,#ff1cb3 316px,#ff0b93 347px,#ff007a 379px)"></i><i style="top:170px;background:linear-gradient(90deg,#007eff 154px,#027dff 157px,#875cff 221px,#ff3eff 274px,#ff2ad6 295px,#ff18b2 320px,#ff0891 352px,#ff007e 377px)"></i><i style="top:172px;background:linear-gradient(90deg,#007bff 155px,#0579ff 159px,#8b58ff 224px,#fe3bff 276px,#ff27d6 297px,#ff16b2 322px,#ff0792 354px,#ff0082 375px)"></i><i style="top:174px;background:linear-gradient(90deg,#0078ff 155px,#0376ff 158px,#85f 224px,#fe38ff 278px,#ff24d5 300px,#ff14b2 325px,#ff0591 358px,#ff0086 373px)"></i><i style="top:176px;background:linear-gradient(90deg,#0075ff 155px,#0274ff 158px,#8752ff 225px,#fe35ff 280px,#ff22d5 302px,#ff11b2 328px,#ff0391 361px,#ff0089 371px)"></i><i style="top:178px;background:linear-gradient(90deg,#0072ff 156px,#0770ff 161px,#8d4eff 229px,#fe32ff 282px,#ff1fd6 304px,#ff10b2 330px,#ff0191 364px,#ff008d 369px)"></i><i style="top:180px;background:linear-gradient(90deg,#006fff 156px,#036eff 159px,#884cff 228px,#fe2fff 284px,#ff1cd5 307px,#ff0db1 334px,#ff0091 367px)"></i><i style="top:182px;background:linear-gradient(90deg,#006dff 156px,#026bff 159px,#884aff 229px,#ff2bfe 287px,#ff1bd7 308px,#ff0bb3 335px,#ff0096 365px)"></i><i style="top:184px;background:linear-gradient(90deg,#006aff 157px,#0768ff 162px,#8b46ff 232px,#ff28fe 289px,#ff18d7 310px,#ff0ab4 337px,#ff009a 363px)"></i><i style="top:186px;background:linear-gradient(90deg,#0067ff 157px,#0466ff 161px,#8944ff 232px,#ff26fe 291px,#ff16d8 312px,#ff08b4 339px,#ff009e 361px)"></i><i style="top:188px;background:linear-gradient(90deg,#0065ff 157px,#0264ff 160px,#8642ff 232px,#ff23fe 293px,#ff14d7 315px,#ff05b3 343px,#ff00a3 359px)"></i><i style="top:190px;background:linear-gradient(90deg,#0062ff 158px,#0860ff 164px,#8d3eff 237px,#ff20fe 295px,#ff12d7 317px,#ff04b3 345px,#ff00a7 357px)"></i><i style="top:192px;background:linear-gradient(90deg,#0060ff 158px,#045eff 162px,#893cff 236px,#ff1efe 297px,#ff10d8 319px,#ff02b4 347px,#ff00ac 355px)"></i><i style="top:194px;background:linear-gradient(90deg,#005eff 158px,#025dff 161px,#873bff 236px,#ff1bfe 299px,#ff0dd7 322px,#ff00b3 351px,#ff00b1 353px)"></i><i style="top:196px;background:linear-gradient(90deg,#005cff 159px,#0a59ff 166px,#9036ff 242px,#ff19fe 301px,#ff0bd7 324px,#ff00b6 351px)"></i><i style="top:198px;background:linear-gradient(90deg,#0059ff 159px,#0458ff 163px,#8935ff 240px,#ff17fe 303px,#ff09d8 326px,#f0b 349px)"></i><i style="top:200px;background:linear-gradient(90deg,#0057ff 159px,#0256ff 162px,#8734ff 240px,#ff14fe 305px,#ff07d8 328px,#ff00c0 347px)"></i><i style="top:202px;background:linear-gradient(90deg,#05f 160px,#0b52ff 168px,#902fff 246px,#ff12fe 307px,#ff05d7 331px,#ff00c5 345px)"></i><i style="top:204px;background:linear-gradient(90deg,#0053ff 160px,#0651ff 165px,#8c2eff 245px,#ff10fe 309px,#ff03d7 333px,#ff00ca 343px)"></i><i style="top:206px;background:linear-gradient(90deg,#0051ff 160px,#0350ff 164px,#892dff 245px,#ff0efe 311px,#ff02d8 335px,#ff00d0 341px)"></i><i style="top:208px;background:linear-gradient(90deg,#004fff 161px,#0e4bff 171px,#9328ff 252px,#ff0cfe 313px,#ff00d8 337px,#ff00d6 339px)"></i><i style="top:210px;background:linear-gradient(90deg,#004dff 161px,#054bff 166px,#8a29ff 248px,#ff0afe 315px,#ff00db 337px)"></i><i style="top:212px;background:linear-gradient(90deg,#004cff 161px,#034aff 165px,#8827ff 248px,#ff08fe 317px,#ff00e1 335px)"></i><i style="top:214px;background:linear-gradient(90deg,#004aff 161px,#0348ff 165px,#8825ff 249px,#ff06fe 319px,#ff00e7 333px)"></i><i style="top:216px;background:linear-gradient(90deg,#0048ff 162px,#0746ff 168px,#8c22ff 253px,#ff04fe 321px,#ff00ec 332px)"></i><i style="top:218px;background:linear-gradient(90deg,#0046ff 162px,#0345ff 166px,#8821ff 252px,#ff02fe 323px,#ff00f3 330px)"></i><i style="top:220px;background:linear-gradient(90deg,#0045ff 162px,#0343ff 166px,#8820ff 253px,#ff00fe 325px,#ff00f9 328px)"></i><i style="top:222px;background:linear-gradient(90deg,#0043ff 163px,#0740ff 169px,#8c1dff 257px,#fe00ff 326px)"></i><i style="top:224px;background:linear-gradient(90deg,#0041ff 163px,#0340ff 167px,#891cff 256px,#f700ff 324px)"></i><i style="top:226px;background:linear-gradient(90deg,#0040ff 163px,#033eff 167px,#881bff 257px,#f100ff 322px)"></i><i style="top:228px;background:linear-gradient(90deg,#003eff 164px,#083bff 171px,#8e17ff 262px,#ea00ff 320px)"></i><i style="top:230px;background:linear-gradient(90deg,#003dff 164px,#053bff 169px,#8a17ff 261px,#e400ff 318px)"></i><i style="top:232px;background:linear-gradient(90deg,#003bff 164px,#033aff 168px,#8916ff 261px,#de00ff 316px)"></i><i style="top:234px;background:linear-gradient(90deg,#0039ff 165px,#0936ff 173px,#8e13ff 266px,#d800ff 314px)"></i><i style="top:236px;background:linear-gradient(90deg,#0038ff 165px,#0436ff 170px,#8912ff 264px,#d200ff 312px)"></i><i style="top:238px;background:linear-gradient(90deg,#0037ff 165px,#0335ff 169px,#8711ff 264px,#c0f 310px)"></i><i style="top:240px;background:linear-gradient(90deg,#0035ff 166px,#0b32ff 176px,#910dff 272px,#c700ff 308px)"></i><i style="top:242px;background:linear-gradient(90deg,#0034ff 166px,#0632ff 172px,#8b0eff 269px,#c100ff 306px)"></i><i style="top:244px;background:linear-gradient(90deg,#03f 166px,#0331ff 170px,#880dff 268px,#bc00ff 304px)"></i><i style="top:246px;background:linear-gradient(90deg,#0031ff 167px,#0f2dff 180px,#9408ff 278px,#b600ff 302px)"></i><i style="top:248px;background:linear-gradient(90deg,#0030ff 167px,#062eff 173px,#8b09ff 273px,#b100ff 300px)"></i><i style="top:250px;background:linear-gradient(90deg,#002fff 167px,#032dff 171px,#8809ff 272px,#ac00ff 298px)"></i><i style="top:252px;background:linear-gradient(90deg,#002dff 168px,#1427ff 185px,#9a03ff 286px,#a700ff 296px)"></i><i style="top:254px;background:linear-gradient(90deg,#002cff 168px,#072aff 175px,#8d05ff 278px,#a300ff 294px)"></i><i style="top:256px;background:linear-gradient(90deg,#002bff 168px,#0429ff 173px,#8a05ff 277px,#9e00ff 292px)"></i><i style="top:258px;background:linear-gradient(90deg,#002aff 169px,#1e21ff 195px,#90f 290px)"></i><i style="top:260px;background:linear-gradient(90deg,#0029ff 169px,#0826ff 177px,#8d01ff 282px,#9500ff 288px)"></i><i style="top:262px;background:linear-gradient(90deg,#0028ff 169px,#0426ff 174px,#8901ff 280px,#9000ff 286px)"></i><i style="top:264px;background:linear-gradient(90deg,#0026ff 170px,#3418ff 214px,#8c00ff 284px)"></i><i style="top:266px;background:linear-gradient(90deg,#0025ff 170px,#0922ff 179px,#80f 282px)"></i><i style="top:268px;background:linear-gradient(90deg,#0024ff 170px,#0423ff 175px,#8400ff 280px)"></i><i style="top:270px;background:linear-gradient(90deg,#0023ff 171px,#4c0eff 236px,#8000ff 278px)"></i><i style="top:272px;background:linear-gradient(90deg,#02f 171px,#0b1fff 182px,#7c00ff 276px)"></i><i style="top:274px;background:linear-gradient(90deg,#0021ff 171px,#051fff 177px,#7800ff 274px)"></i><i style="top:276px;background:linear-gradient(90deg,#0020ff 172px,#5209ff 244px,#7500ff 273px)"></i><i style="top:278px;background:linear-gradient(90deg,#001fff 172px,#0d1bff 185px,#7100ff 271px)"></i><i style="top:280px;background:linear-gradient(90deg,#001eff 172px,#051cff 178px,#6e00ff 269px)"></i><i style="top:282px;background:linear-gradient(90deg,#001dff 173px,#5704ff 251px,#6a00ff 267px)"></i><i style="top:284px;background:linear-gradient(90deg,#001cff 173px,#1117ff 190px,#60f 265px)"></i><i style="top:286px;background:linear-gradient(90deg,#001bff 173px,#0619ff 180px,#6300ff 263px)"></i><i style="top:288px;background:linear-gradient(90deg,#001aff 174px,#5b00ff 257px,#5f00ff 261px)"></i><i style="top:290px;background:linear-gradient(90deg,#0019ff 174px,#1812ff 198px,#5c00ff 259px)"></i><i style="top:292px;background:linear-gradient(90deg,#0019ff 174px,#0716ff 182px,#5900ff 257px)"></i><i style="top:294px;background:linear-gradient(90deg,#0017ff 175px,#50f 255px)"></i><i style="top:296px;background:linear-gradient(90deg,#0017ff 175px,#270bff 213px,#5200ff 253px)"></i><i style="top:298px;background:linear-gradient(90deg,#0016ff 175px,#0713ff 184px,#4f00ff 251px)"></i><i style="top:300px;background:linear-gradient(90deg,#0015ff 175px,#0513ff 182px,#4c00ff 249px)"></i><i style="top:302px;background:linear-gradient(90deg,#0014ff 176px,#4600ff 244px,#4900ff 247px)"></i><i style="top:304px;background:linear-gradient(90deg,#0013ff 176px,#0910ff 187px,#4600ff 245px)"></i><i style="top:306px;background:linear-gradient(90deg,#0013ff 176px,#0610ff 184px,#4300ff 243px)"></i><i style="top:308px;background:linear-gradient(90deg,#0012ff 177px,#4000ff 241px)"></i><i style="top:310px;background:linear-gradient(90deg,#01f 177px,#0b0dff 190px,#3d00ff 239px)"></i><i style="top:312px;background:linear-gradient(90deg,#0010ff 177px,#060eff 185px,#3a00ff 237px)"></i><i style="top:314px;background:linear-gradient(90deg,#000fff 178px,#3700ff 235px)"></i><i style="top:316px;background:linear-gradient(90deg,#000fff 178px,#0f0aff 195px,#3500ff 233px)"></i><i style="top:318px;background:linear-gradient(90deg,#000eff 178px,#070cff 187px,#3200ff 231px)"></i><i style="top:320px;background:linear-gradient(90deg,#000dff 179px,#2f00ff 229px)"></i><i style="top:322px;background:linear-gradient(90deg,#000dff 179px,#1307ff 201px,#2d00ff 227px)"></i><i style="top:324px;background:linear-gradient(90deg,#000cff 179px,#070aff 188px,#2a00ff 225px)"></i><i style="top:326px;background:linear-gradient(90deg,#000bff 180px,#2800ff 223px)"></i><i style="top:328px;background:linear-gradient(90deg,#000aff 180px,#1d02ff 213px,#2500ff 221px)"></i><i style="top:330px;background:linear-gradient(90deg,#000aff 180px,#0707ff 190px,#2300ff 219px)"></i><i style="top:332px;background:linear-gradient(90deg,#0009ff 181px,#2000ff 217px)"></i><i style="top:334px;background:linear-gradient(90deg,#0008ff 181px,#1e00ff 215px)"></i><i style="top:336px;background:linear-gradient(90deg,#0008ff 181px,#0805ff 192px,#1c00ff 214px)"></i><i style="top:338px;background:linear-gradient(90deg,#0007ff 182px,#1a00ff 212px)"></i><i style="top:340px;background:linear-gradient(90deg,#0006ff 182px,#1800ff 210px)"></i><i style="top:342px;background:linear-gradient(90deg,#0006ff 182px,#0a03ff 195px,#1600ff 208px)"></i><i style="top:344px;background:linear-gradient(90deg,#0005ff 183px,#1300ff 206px)"></i><i style="top:346px;background:linear-gradient(90deg,#0005ff 183px,#10f 204px)"></i><i style="top:348px;background:linear-gradient(90deg,#0004ff 183px,#0c00ff 199px,#0f00ff 202px)"></i><i style="top:350px;background:linear-gradient(90deg,#0003ff 184px,#0d00ff 200px)"></i><i style="top:352px;background:linear-gradient(90deg,#0003ff 184px,#0b00ff 198px)"></i><i style="top:354px;background:linear-gradient(90deg,#0002ff 184px,#0900ff 196px)"></i><i style="top:356px;background:linear-gradient(90deg,#0002ff 185px,#0700ff 194px)"></i><i style="top:358px;background:linear-gradient(90deg,#0001ff 185px,#0500ff 192px)"></i><i style="top:360px;background:linear-gradient(90deg,#0001ff 185px,#0300ff 190px)"></i></div><svg width="1668" height="944" viewBox="0 0 1668 944"><text x="1321" y="83" font-size="14.5" text-anchor="middle">CIE 1976 u'v'</text><line x1="1018.5" y1="580" x2="1018.5" y2="587" stroke="#ccc"/><text x="1018.5" y="602" font-size="14.5" text-anchor="middle">0</text><line x1="1013" y1="581.5" x2="1018" y2="581.5" stroke="#ccc"/><text x="1012" y="588.1" font-size="14.5" text-anchor="end">0</text><line x1="1071.5" y1="580" x2="1071.5" y2="587" stroke="#ccc"/><text x="1071.5" y="602" font-size="14.5" text-anchor="middle">0,05</text><line x1="1013" y1="540.5" x2="1018" y2="540.5" stroke="#ccc"/><text x="1012" y="547.1" font-size="14.5" text-anchor="end">0,05</text><line x1="1125.5" y1="580" x2="1125.5" y2="587" stroke="#ccc"/><text x="1125.5" y="602" font-size="14.5" text-anchor="middle">0,1</text><line x1="1013" y1="499.5" x2="1018" y2="499.5" stroke="#ccc"/><text x="1012" y="506.1" font-size="14.5" text-anchor="end">0,1</text><line x1="1178.5" y1="580" x2="1178.5" y2="587" stroke="#ccc"/><text x="1178.5" y="602" font-size="14.5" text-anchor="middle">0,15</text><line x1="1013" y1="458.5" x2="1018" y2="458.5" stroke="#ccc"/><text x="1012" y="465.1" font-size="14.5" text-anchor="end">0,15</text><line x1="1231.5" y1="580" x2="1231.5" y2="587" stroke="#ccc"/><text x="1231.5" y="602" font-size="14.5" text-anchor="middle">0,2</text><line x1="1013" y1="417.5" x2="1018" y2="417.5" stroke="#ccc"/><text x="1012" y="424.1" font-size="14.5" text-anchor="end">0,2</text><line x1="1284.5" y1="580" x2="1284.5" y2="587" stroke="#ccc"/><text x="1284.5" y="602" font-size="14.5" text-anchor="middle">0,25</text><line x1="1013" y1="376.5" x2="1018" y2="376.5" stroke="#ccc"/><text x="1012" y="383.1" font-size="14.5" text-anchor="end">0,25</text><line x1="1337.5" y1="580" x2="1337.5" y2="587" stroke="#ccc"/><text x="1337.5" y="602" font-size="14.5" text-anchor="middle">0,3</text><line x1="1013" y1="335.5" x2="1018" y2="335.5" stroke="#ccc"/><text x="1012" y="342.1" font-size="14.5" text-anchor="end">0,3</text><line x1="1391.5" y1="580" x2="1391.5" y2="587" stroke="#ccc"/><text x="1391.5" y="602" font-size="14.5" text-anchor="middle">0,35</text><line x1="1013" y1="294.5" x2="1018" y2="294.5" stroke="#ccc"/><text x="1012" y="301.1" font-size="14.5" text-anchor="end">0,35</text><line x1="1444.5" y1="580" x2="1444.5" y2="587" stroke="#ccc"/><text x="1444.5" y="602" font-size="14.5" text-anchor="middle">0,4</text><line x1="1013" y1="253.5" x2="1018" y2="253.5" stroke="#ccc"/><text x="1012" y="260.1" font-size="14.5" text-anchor="end">0,4</text><line x1="1497.5" y1="580" x2="1497.5" y2="587" stroke="#ccc"/><text x="1497.5" y="602" font-size="14.5" text-anchor="middle">0,45</text><line x1="1013" y1="212.5" x2="1018" y2="212.5" stroke="#ccc"/><text x="1012" y="219.1" font-size="14.5" text-anchor="end">0,45</text><line x1="1550.5" y1="580" x2="1550.5" y2="587" stroke="#ccc"/><text x="1550.5" y="602" font-size="14.5" text-anchor="middle">0,5</text><line x1="1013" y1="171.5" x2="1018" y2="171.5" stroke="#ccc"/><text x="1012" y="178.1" font-size="14.5" text-anchor="end">0,5</text><line x1="1603.5" y1="580" x2="1603.5" y2="587" stroke="#ccc"/><text x="1603.5" y="602" font-size="14.5" text-anchor="middle">0,55</text><line x1="1013" y1="130.5" x2="1018" y2="130.5" stroke="#ccc"/><text x="1012" y="137.1" font-size="14.5" text-anchor="end">0,55</text></svg><div class="mk" style="left:1144.1px;top:110.9px"></div><div class="mk" style="left:1168.0px;top:134.9px"></div><div class="mk" style="left:1207.9px;top:126.8px"></div><div class="mk" style="left:1228.1px;top:118.9px"></div><div class="mk" style="left:1255.1px;top:122.8px"></div><div class="mk" style="left:1287.1px;top:130.0px"></div><div class="mk" style="left:1330.1px;top:134.0px"></div><div class="mk" style="left:1205.1px;top:149.0px"></div><div class="mk" style="left:1270.2px;top:163.0px"></div><div class="mk" style="left:1259.1px;top:168.9px"></div><div class="mk" style="left:1349.0px;top:176.1px"></div><div class="mk" style="left:1174.9px;top:180.0px"></div><div class="mk" style="left:1159.0px;top:198.8px"></div><div class="mk" style="left:1316.5px;top:221.8px"></div><div class="mk" style="left:1164.0px;top:231.0px"></div><div class="mk" style="left:1197.8px;top:228.0px"></div><div class="mk" style="left:1218.2px;top:233.0px"></div><div class="mk" style="left:1254.2px;top:251.0px"></div><div class="mk" style="left:1201.0px;top:280.8px"></div><div class="mk" style="left:1201.0px;top:330.8px"></div><div class="mk" style="left:1197.8px;top:443.0px"></div><div class="mk" style="left:1336.0px;top:301.2px"></div><div class="mk" style="left:1410.0px;top:164.2px"></div><div class="mk" style="left:1491.0px;top:143.5px"></div><div class="mk" style="left:1221px;top:188px;border:2.5px solid #000"></div><div class="mc" style="left:1146.7px;top:113.9px;background:#00f000"></div><div class="mc" style="left:1170.0px;top:135.5px;background:#469449"></div><div class="mc" style="left:1209.5px;top:127.5px;background:#9dbc40"></div><div class="mc" style="left:1230.8px;top:120.5px;background:#ffff00"></div><div class="mc" style="left:1258.1px;top:125.8px;background:#e7c71f"></div><div class="mc" style="left:1289.5px;top:131.5px;background:#e0a32e"></div><div class="mc" style="left:1333.1px;top:135.5px;background:#d67e2c"></div><div class="mc" style="left:1206.5px;top:149.1px;background:#576c43"></div><div class="mc" style="left:1276.1px;top:162.9px;background:#735244"></div><div class="mc" style="left:1261.1px;top:170.9px;background:#c29682"></div><div class="mc" style="left:1354.9px;top:177.9px;background:#c15a63"></div><div class="mc" style="left:1176.5px;top:182.0px;background:#67bdaa"></div><div class="mc" style="left:1160.5px;top:201.1px;background:#00ffff"></div><div class="mc" style="left:1320.9px;top:225.2px;background:#bb5695"></div><div class="mc" style="left:1161.2px;top:232.5px;background:#0885a1"></div><div class="mc" style="left:1198.5px;top:231.0px;background:#627a9d"></div><div class="mc" style="left:1220.0px;top:235.5px;background:#8580b1"></div><div class="mc" style="left:1257.2px;top:257.0px;background:#5e3c6c"></div><div class="mc" style="left:1199.2px;top:288.0px;background:#505ba6"></div><div class="mc" style="left:1198.5px;top:342.5px;background:#383d96"></div><div class="mc" style="left:1194.8px;top:446.0px;background:#0000ff"></div><div class="mc" style="left:1336.8px;top:304.8px;background:#ff00ff"></div><div class="mc" style="left:1423.0px;top:164.0px;background:#af363c"></div><div class="mc" style="left:1499.0px;top:145.2px;background:#ff0000"></div><div class="mc" style="left:1247.9px;top:176px;width:10px;height:10px;background:#000"></div><div class="mc" style="left:1222.9px;top:190px;background:#a0a0a0"></div><div style="left:1454px;top:408px;width:199px;height:131px;background:#888;border:1px solid #8a8a7a"></div><div class="ins"><i style="top:0px;background:linear-gradient(90deg,#6b9a00 0,#9a9900 161px,#9a8e00 197px)"></i><i style="top:2px;background:linear-gradient(90deg,#6c9a00 0,#9a9900 159px,#9a8d00 197px)"></i><i style="top:4px;background:linear-gradient(90deg,#6c9a00 0,#9a9900 157px,#9a8d00 197px)"></i><i style="top:6px;background:linear-gradient(90deg,#6d9a00 0,#9a9900 155px,#9a8c00 197px)"></i><i style="top:8px;background:linear-gradient(90deg,#6d9a00 0,#9a9900 153px,#9a8c00 197px)"></i><i style="top:10px;background:linear-gradient(90deg,#6d9a00 0,#9a9900 151px,#9a8b00 197px)"></i><i style="top:12px;background:linear-gradient(90deg,#6e9a00 0,#9a9900 150px,#9a8b00 197px)"></i><i style="top:14px;background:linear-gradient(90deg,#6e9a00 0,#9a9900 148px,#9a8a00 197px)"></i><i style="top:16px;background:linear-gradient(90deg,#6f9a00 0,#9a9900 146px,#9a8a00 197px)"></i><i style="top:18px;background:linear-gradient(90deg,#6f9a01 0,#9a9900 144px,#9a8900 197px)"></i><i style="top:20px;background:linear-gradient(90deg,#709a01 0,#9a9900 142px,#9a8900 197px)"></i><i style="top:22px;background:linear-gradient(90deg,#709a01 0,#9a9900 140px,#9a8800 197px)"></i><i style="top:24px;background:linear-gradient(90deg,#719a01 0,#9a9900 139px,#9a8800 197px)"></i><i style="top:26px;background:linear-gradient(90deg,#719a02 0,#9a9900 137px,#9a8700 197px)"></i><i style="top:28px;background:linear-gradient(90deg,#729a02 0,#999a00 126px,#9a8700 197px)"></i><i style="top:30px;background:linear-gradient(90deg,#729a02 0,#929a00 103px,#9a9900 134px,#9a8600 197px)"></i><i style="top:32px;background:linear-gradient(90deg,#739a02 0,#909a00 95px,#9a9900 132px,#9a8600 197px)"></i><i style="top:34px;background:linear-gradient(90deg,#739a03 0,#8f9a00 92px,#9a9900 130px,#9a8500 197px)"></i><i style="top:36px;background:linear-gradient(90deg,#749a03 0,#909a00 91px,#9a9900 128px,#9a8500 197px)"></i><i style="top:38px;background:linear-gradient(90deg,#749a03 0,#909a00 91px,#9a9900 126px,#9a8400 197px)"></i><i style="top:40px;background:linear-gradient(90deg,#749a04 0,#919a00 92px,#9a9900 125px,#9a8400 197px)"></i><i style="top:42px;background:linear-gradient(90deg,#759a04 0,#929a00 94px,#9a9900 123px,#9a8300 197px)"></i><i style="top:44px;background:linear-gradient(90deg,#759a04 0,#949a00 96px,#9a9900 121px,#9a8300 197px)"></i><i style="top:46px;background:linear-gradient(90deg,#769a04 0,#959a00 99px,#9a9800 120px,#9a8200 197px)"></i><i style="top:48px;background:linear-gradient(90deg,#769a05 0,#969a00 101px,#9a9800 120px,#9a8100 197px)"></i><i style="top:50px;background:linear-gradient(90deg,#779a05 0,#989a00 104px,#9a9500 126px,#9a8100 197px)"></i><i style="top:52px;background:linear-gradient(90deg,#779a05 0,#9a9a00 107px,#9a8000 197px)"></i><i style="top:54px;background:linear-gradient(90deg,#789a05 0,#9a9900 110px,#9a8000 197px)"></i><i style="top:56px;background:linear-gradient(90deg,#789a06 0,#9a9900 109px,#9a7f00 197px)"></i><i style="top:58px;background:linear-gradient(90deg,#799a06 0,#9a9900 107px,#9a7f00 197px)"></i><i style="top:60px;background:linear-gradient(90deg,#799a06 0,#9a9900 106px,#9a7e00 197px)"></i><i style="top:62px;background:linear-gradient(90deg,#7a9a06 0,#9a9900 104px,#9a7e00 197px)"></i><i style="top:64px;background:linear-gradient(90deg,#7b9a07 0,#9a9900 102px,#9a7d00 197px)"></i><i style="top:66px;background:linear-gradient(90deg,#7b9a07 0,#9a9900 100px,#9a7d00 197px)"></i><i style="top:68px;background:linear-gradient(90deg,#7c9a07 0,#9a9901 98px,#9a7d00 197px)"></i><i style="top:70px;background:linear-gradient(90deg,#7c9a08 0,#9a9901 96px,#9a7c00 197px)"></i><i style="top:72px;background:linear-gradient(90deg,#7d9a08 0,#9a9901 95px,#9a7c00 197px)"></i><i style="top:74px;background:linear-gradient(90deg,#7d9a08 0,#9a9902 93px,#9a7b00 197px)"></i><i style="top:76px;background:linear-gradient(90deg,#7e9a08 0,#9a9902 91px,#9a7d00 188px,#9a7b00 197px)"></i><i style="top:78px;background:linear-gradient(90deg,#7e9a09 0,#9a9903 89px,#9a8000 175px,#9a7a00 197px)"></i><i style="top:80px;background:linear-gradient(90deg,#7f9a09 0,#9a9903 87px,#9a8000 170px,#9a7a00 197px)"></i><i style="top:82px;background:linear-gradient(90deg,#7f9a09 0,#9a9903 85px,#9a8000 169px,#9a7900 197px)"></i><i style="top:84px;background:linear-gradient(90deg,#809a0a 0,#9a9904 84px,#9a7f00 171px,#9a7900 197px)"></i><i style="top:86px;background:linear-gradient(90deg,#809a0a 0,#9a9904 82px,#9a7e00 173px,#9a7800 197px)"></i><i style="top:88px;background:linear-gradient(90deg,#819a0a 0,#9a9905 80px,#9a7d00 175px,#9a7800 197px)"></i><i style="top:90px;background:linear-gradient(90deg,#819a0a 0,#9a9905 78px,#9a7c00 177px,#9a7700 197px)"></i><i style="top:92px;background:linear-gradient(90deg,#829a0b 0,#9a9906 76px,#9a7b00 180px,#9a7700 197px)"></i><i style="top:94px;background:linear-gradient(90deg,#839a0b 0,#9a9906 74px,#9a7a00 183px,#9a7600 197px)"></i><i style="top:96px;background:linear-gradient(90deg,#839a0b 0,#9a9906 73px,#9a7800 186px,#9a7600 197px)"></i><i style="top:98px;background:linear-gradient(90deg,#849a0c 0,#9a9907 71px,#9a7800 184px,#9a7500 197px)"></i><i style="top:100px;background:linear-gradient(90deg,#849a0c 0,#9a9907 69px,#9a7800 182px,#9a7500 197px)"></i><i style="top:102px;background:linear-gradient(90deg,#859a0c 0,#9a9908 67px,#9a7800 180px,#9a7400 197px)"></i><i style="top:104px;background:linear-gradient(90deg,#859a0d 0,#9a9908 65px,#9a7800 178px,#9a7400 197px)"></i><i style="top:106px;background:linear-gradient(90deg,#869a0d 0,#9a9908 64px,#9a7800 177px,#9a7300 197px)"></i><i style="top:108px;background:linear-gradient(90deg,#879a0d 0,#9a9909 62px,#9a7801 174px,#9a7300 197px)"></i><i style="top:110px;background:linear-gradient(90deg,#879a0e 0,#9a9909 60px,#9a7801 172px,#9a7200 197px)"></i><i style="top:112px;background:linear-gradient(90deg,#889a0e 0,#9a990a 58px,#9a7801 170px,#9a7200 197px)"></i><i style="top:114px;background:linear-gradient(90deg,#889a0e 0,#9a990a 56px,#9a7802 168px,#9a7200 197px)"></i><i style="top:116px;background:linear-gradient(90deg,#899a0e 0,#9a990b 54px,#9a7802 165px,#9a7100 197px)"></i><i style="top:118px;background:linear-gradient(90deg,#899a0f 0,#9a990b 53px,#9a7802 164px,#9a7100 197px)"></i><i style="top:120px;background:linear-gradient(90deg,#8a9a0f 0,#9a990c 51px,#9a7803 162px,#9a7000 197px)"></i><i style="top:122px;background:linear-gradient(90deg,#8b9a0f 0,#9a990c 49px,#9a7803 160px,#9a7001 197px)"></i><i style="top:124px;background:linear-gradient(90deg,#8b9a10 0,#9a990c 47px,#9a7803 158px,#9a6f01 197px)"></i><i style="top:126px;background:linear-gradient(90deg,#8c9a10 0,#9a990d 45px,#9a7804 155px,#9a6f01 197px)"></i><i style="top:128px;background:linear-gradient(90deg,#8c9a10 0,#9a990d 43px,#9a7804 153px,#9a6e01 197px)"></i></div><div class="ins" style="clip-path:polygon(972.0px 523.8px,-374.4px -183.6px,-968.4px 1231.2px)"><i style="top:0px;background:linear-gradient(90deg,#b1ff00 0,#fffe00 159px,#ffeb00 197px)"></i><i style="top:2px;background:linear-gradient(90deg,#b2ff00 0,#fffe00 157px,#ffea00 197px)"></i><i style="top:4px;background:linear-gradient(90deg,#b3ff00 0,#fffe00 155px,#ffe900 197px)"></i><i style="top:6px;background:linear-gradient(90deg,#b3ff00 0,#fffe00 153px,#ffe800 197px)"></i><i style="top:8px;background:linear-gradient(90deg,#b4ff00 0,#fffe00 151px,#ffe700 197px)"></i><i style="top:10px;background:linear-gradient(90deg,#b5ff00 0,#fffe00 149px,#ffe600 197px)"></i><i style="top:12px;background:linear-gradient(90deg,#b6ff00 0,#fffe00 148px,#ffe500 197px)"></i><i style="top:14px;background:linear-gradient(90deg,#b6ff00 0,#fffe00 146px,#ffe500 197px)"></i><i style="top:16px;background:linear-gradient(90deg,#b7ff01 0,#fffe00 144px,#ffe400 197px)"></i><i style="top:18px;background:linear-gradient(90deg,#b8ff01 0,#fffe00 142px,#ffe300 197px)"></i><i style="top:20px;background:linear-gradient(90deg,#b9ff02 0,#fffe00 140px,#ffe200 197px)"></i><i style="top:22px;background:linear-gradient(90deg,#b9ff02 0,#deff00 73px,#fffd00 139px,#ffe100 197px)"></i><i style="top:24px;background:linear-gradient(90deg,#baff02 0,#d7ff00 59px,#fffe00 137px,#ffe000 197px)"></i><i style="top:26px;background:linear-gradient(90deg,#bbff03 0,#d7ff00 56px,#fffe00 135px,#ffdf00 197px)"></i><i style="top:28px;background:linear-gradient(90deg,#bcff03 0,#d8ff00 56px,#fffe00 133px,#ffde00 197px)"></i><i style="top:30px;background:linear-gradient(90deg,#bdff04 0,#d9ff00 57px,#fffe00 131px,#ffde00 197px)"></i><i style="top:32px;background:linear-gradient(90deg,#bdff04 0,#dbff00 59px,#fffe00 129px,#fd0 197px)"></i><i style="top:34px;background:linear-gradient(90deg,#beff05 0,#df0 62px,#fffd00 128px,#ffdc00 197px)"></i><i style="top:36px;background:linear-gradient(90deg,#bfff05 0,#e0ff00 65px,#fffe00 126px,#ffdb00 197px)"></i><i style="top:38px;background:linear-gradient(90deg,#c0ff05 0,#e2ff00 68px,#fffe00 124px,#ffda00 197px)"></i><i style="top:40px;background:linear-gradient(90deg,#c1ff06 0,#e5ff00 71px,#fffe00 122px,#ffd900 197px)"></i><i style="top:42px;background:linear-gradient(90deg,#c1ff06 0,#e7ff00 74px,#fffe00 120px,#ffd900 197px)"></i><i style="top:44px;background:linear-gradient(90deg,#c2ff07 0,#eaff00 78px,#fffe00 118px,#ffd800 197px)"></i><i style="top:46px;background:linear-gradient(90deg,#c3ff07 0,#edff00 81px,#fffd00 117px,#ffd700 197px)"></i><i style="top:48px;background:linear-gradient(90deg,#c4ff08 0,#f0ff00 85px,#fffe00 115px,#ffd600 197px)"></i><i style="top:50px;background:linear-gradient(90deg,#c5ff08 0,#f3ff00 88px,#fffe00 113px,#ffd500 197px)"></i><i style="top:52px;background:linear-gradient(90deg,#c5ff08 0,#f6ff00 92px,#fffd00 112px,#ffd400 197px)"></i><i style="top:54px;background:linear-gradient(90deg,#c6ff09 0,#f9ff00 96px,#fffd00 110px,#ffd400 197px)"></i><i style="top:56px;background:linear-gradient(90deg,#c7ff09 0,#fcff00 99px,#fffc00 110px,#ffd300 197px)"></i><i style="top:58px;background:linear-gradient(90deg,#c8ff0a 0,#ff0 103px,#ffd400 192px,#ffd200 197px)"></i><i style="top:60px;background:linear-gradient(90deg,#c9ff0a 0,#fffe00 104px,#ffd300 192px,#ffd100 197px)"></i><i style="top:62px;background:linear-gradient(90deg,#caff0b 0,#fffe00 102px,#ffd400 189px,#ffd000 197px)"></i><i style="top:64px;background:linear-gradient(90deg,#caff0b 0,#fffe00 100px,#ffd400 187px,#ffcf00 197px)"></i><i style="top:66px;background:linear-gradient(90deg,#cbff0c 0,#fffe01 98px,#ffd400 185px,#ffcf00 197px)"></i><i style="top:68px;background:linear-gradient(90deg,#ccff0c 0,#fffe01 96px,#ffd400 183px,#ffce00 197px)"></i><i style="top:70px;background:linear-gradient(90deg,#cdff0d 0,#fffd02 95px,#ffd300 182px,#ffcd00 197px)"></i><i style="top:72px;background:linear-gradient(90deg,#ceff0d 0,#fffe02 93px,#ffe300 145px,#fc0 197px)"></i><i style="top:74px;background:linear-gradient(90deg,#cfff0e 0,#fffe03 91px,#ffe400 141px,#ffcb00 197px)"></i><i style="top:76px;background:linear-gradient(90deg,#d0ff0e 0,#fffe04 89px,#ffe200 142px,#ffcb00 197px)"></i><i style="top:78px;background:linear-gradient(90deg,#d1ff0e 0,#fffe05 87px,#ffe100 144px,#ffca00 197px)"></i><i style="top:80px;background:linear-gradient(90deg,#d1ff0f 0,#fffe05 85px,#ffdf00 146px,#ffc900 197px)"></i><i style="top:82px;background:linear-gradient(90deg,#d2ff0f 0,#fffd06 84px,#ffdc00 149px,#ffc800 197px)"></i><i style="top:84px;background:linear-gradient(90deg,#d3ff10 0,#fffe07 82px,#ffda00 153px,#ffc700 197px)"></i><i style="top:86px;background:linear-gradient(90deg,#d4ff10 0,#fffe07 80px,#ffd800 156px,#ffc700 197px)"></i><i style="top:88px;background:linear-gradient(90deg,#d5ff11 0,#fffe08 78px,#ffd500 159px,#ffc600 197px)"></i><i style="top:90px;background:linear-gradient(90deg,#d6ff11 0,#fffe09 76px,#ffd400 161px,#ffc500 197px)"></i><i style="top:92px;background:linear-gradient(90deg,#d7ff12 0,#fffe09 74px,#ffd400 159px,#ffc400 197px)"></i><i style="top:94px;background:linear-gradient(90deg,#d8ff12 0,#fffd0a 73px,#ffd300 158px,#ffc300 197px)"></i><i style="top:96px;background:linear-gradient(90deg,#d9ff13 0,#fffe0b 71px,#ffd300 156px,#ffc300 197px)"></i><i style="top:98px;background:linear-gradient(90deg,#daff13 0,#fffe0b 69px,#ffd301 154px,#ffc200 197px)"></i><i style="top:100px;background:linear-gradient(90deg,#dbff14 0,#fffe0c 67px,#ffd302 152px,#ffc100 197px)"></i><i style="top:102px;background:linear-gradient(90deg,#dbff14 0,#fffe0d 65px,#ffd402 149px,#ffc000 197px)"></i><i style="top:104px;background:linear-gradient(90deg,#dcff15 0,#fffe0e 63px,#ffd403 147px,#ffbf00 197px)"></i><i style="top:106px;background:linear-gradient(90deg,#ddff15 0,#fffd0e 62px,#ffd303 146px,#ffbf00 197px)"></i><i style="top:108px;background:linear-gradient(90deg,#deff16 0,#fffe0f 60px,#ffd304 144px,#ffbe00 197px)"></i><i style="top:110px;background:linear-gradient(90deg,#dfff16 0,#fffe10 58px,#ffd305 142px,#ffbd00 197px)"></i><i style="top:112px;background:linear-gradient(90deg,#e0ff17 0,#fffe11 56px,#ffd305 140px,#ffbc00 197px)"></i><i style="top:114px;background:linear-gradient(90deg,#e1ff17 0,#fffe11 54px,#ffd406 137px,#ffbc00 197px)"></i><i style="top:116px;background:linear-gradient(90deg,#e2ff18 0,#fffe12 52px,#ffd407 135px,#fb0 197px)"></i><i style="top:118px;background:linear-gradient(90deg,#e3ff18 0,#fffd13 51px,#ffd307 134px,#ffba00 197px)"></i><i style="top:120px;background:linear-gradient(90deg,#e4ff19 0,#fffe13 49px,#ffd308 132px,#ffb901 197px)"></i><i style="top:122px;background:linear-gradient(90deg,#e5ff1a 0,#fffe14 47px,#ffd309 130px,#ffb901 197px)"></i><i style="top:124px;background:linear-gradient(90deg,#e6ff1a 0,#fffe15 45px,#ffd309 128px,#ffb802 197px)"></i><i style="top:126px;background:linear-gradient(90deg,#e7ff1b 0,#fffe16 43px,#ffd30a 126px,#ffb702 197px)"></i><i style="top:128px;background:linear-gradient(90deg,#e8ff1b 0,#fffe16 41px,#ffd40b 123px,#ffb602 197px)"></i></div><div class="mk" style="left:1545px;top:465px;border:1.6px solid rgba(255,255,255,.85)"></div><div class="mc" style="left:1553px;top:462.7px;background:#ffee00;width:10px;height:10px"></div><div style="left:1403px;top:547px;width:252px;height:30px;background:#323232"></div><div style="left:1404.50px;top:553.44px;font-size:19.8px;line-height:19.8px;color:#f2f2f2;transform-origin:0 0;transform:scaleX(0.9917);-webkit-text-stroke:0.3px;">RGB Triplet: 255, 255, 0</div><div style="left:321px;top:630px;width:1347px;height:227px;background:#0c0c0c"></div><div style="left:323px;top:632px;width:1345px;height:24px;background:linear-gradient(#323232 0,#2c2c2c 45%,#1c1c1c 50%,#161616 100%)"></div><div style="left:323px;top:632px;width:1345px;height:224px;overflow:hidden"><div style="left:170.60px;top:4.58px;font-size:14.2px;line-height:14.2px;color:#f4f4f4;transform-origin:0 0;transform:scaleX(1.33);-webkit-text-stroke:0.25px;">White</div><div style="left:232.50px;top:4.58px;font-size:14.2px;line-height:14.2px;color:#f4f4f4;transform-origin:0 0;transform:scaleX(1.2);-webkit-text-stroke:0.25px;">Gray 80</div><div style="left:303.50px;top:4.58px;font-size:14.2px;line-height:14.2px;color:#f4f4f4;transform-origin:0 0;transform:scaleX(1.2);-webkit-text-stroke:0.25px;">Gray 65</div><div style="left:374.50px;top:4.58px;font-size:14.2px;line-height:14.2px;color:#f4f4f4;transform-origin:0 0;transform:scaleX(1.2);-webkit-text-stroke:0.25px;">Gray 50</div><div style="left:445.00px;top:4.58px;font-size:14.2px;line-height:14.2px;color:#f4f4f4;transform-origin:0 0;transform:scaleX(1.2);-webkit-text-stroke:0.25px;">Gray 35</div><div style="left:518.50px;top:4.58px;font-size:14.2px;line-height:14.2px;color:#f4f4f4;transform-origin:0 0;transform:scaleX(1.2);-webkit-text-stroke:0.25px;">Black</div><div style="left:572.50px;top:4.58px;font-size:14.2px;line-height:14.2px;color:#f4f4f4;transform-origin:0 0;transform:scaleX(1.2);-webkit-text-stroke:0.25px;">Dark Skin</div><div style="left:656.50px;top:4.58px;font-size:14.2px;line-height:14.2px;color:#f4f4f4;transform-origin:0 0;transform:scaleX(1.2);-webkit-text-stroke:0.25px;">Light Skin</div><div style="left:742.00px;top:4.58px;font-size:14.2px;line-height:14.2px;color:#f4f4f4;transform-origin:0 0;transform:scaleX(1.2);-webkit-text-stroke:0.25px;">Blue Sky</div><div style="left:818.00px;top:4.58px;font-size:14.2px;line-height:14.2px;color:#f4f4f4;transform-origin:0 0;transform:scaleX(1.2);-webkit-text-stroke:0.25px;">Foliage</div><div style="left:884.50px;top:4.58px;font-size:14.2px;line-height:14.2px;color:#f4f4f4;transform-origin:0 0;transform:scaleX(1.2);-webkit-text-stroke:0.25px;">Blue Flower</div><div style="left:988.00px;top:4.58px;font-size:14.2px;line-height:14.2px;color:#f4f4f4;transform-origin:0 0;transform:scaleX(1.2);-webkit-text-stroke:0.25px;">Bluish Green</div><div style="left:1099.00px;top:4.58px;font-size:14.2px;line-height:14.2px;color:#f4f4f4;transform-origin:0 0;transform:scaleX(1.2);-webkit-text-stroke:0.25px;">Orange</div><div style="left:1167.00px;top:4.58px;font-size:14.2px;line-height:14.2px;color:#f4f4f4;transform-origin:0 0;transform:scaleX(1.2);-webkit-text-stroke:0.25px;">Purplish Blue</div><div style="left:1280.50px;top:4.58px;font-size:14.2px;line-height:14.2px;color:#f4f4f4;transform-origin:0 0;transform:scaleX(1.2);-webkit-text-stroke:0.25px;">Moderate Red</div><div style="left:0;width:1345px;top:23.75px;height:23.75px;background:#454545"></div><div style="left:15.00px;top:28.15px;font-size:15px;line-height:15px;color:#f4f4f4;transform-origin:0 0;transform:scaleX(1.225);-webkit-text-stroke:0.5px;font-weight:bold;">x: CIE31</div><div style="left:166.00px;top:28.15px;font-size:15px;line-height:15px;color:#f4f4f4;transform-origin:0 0;transform:scaleX(1.225);-webkit-text-stroke:0.25px;">0,31</div><div style="left:232.50px;top:28.15px;font-size:15px;line-height:15px;color:#f4f4f4;transform-origin:0 0;transform:scaleX(1.225);-webkit-text-stroke:0.25px;">0,31</div><div style="left:303.50px;top:28.15px;font-size:15px;line-height:15px;color:#f4f4f4;transform-origin:0 0;transform:scaleX(1.225);-webkit-text-stroke:0.25px;">0,31</div><div style="left:374.50px;top:28.15px;font-size:15px;line-height:15px;color:#f4f4f4;transform-origin:0 0;transform:scaleX(1.225);-webkit-text-stroke:0.25px;">0,31</div><div style="left:445.00px;top:28.15px;font-size:15px;line-height:15px;color:#f4f4f4;transform-origin:0 0;transform:scaleX(1.225);-webkit-text-stroke:0.25px;">0,31</div><div style="left:516.00px;top:28.15px;font-size:15px;line-height:15px;color:#f4f4f4;transform-origin:0 0;transform:scaleX(1.225);-webkit-text-stroke:0.25px;">0,36</div><div style="left:572.50px;top:28.15px;font-size:15px;line-height:15px;color:#f4f4f4;transform-origin:0 0;transform:scaleX(1.225);-webkit-text-stroke:0.25px;">0,41</div><div style="left:656.50px;top:28.15px;font-size:15px;line-height:15px;color:#f4f4f4;transform-origin:0 0;transform:scaleX(1.225);-webkit-text-stroke:0.25px;">0,38</div><div style="left:742.00px;top:28.15px;font-size:15px;line-height:15px;color:#f4f4f4;transform-origin:0 0;transform:scaleX(1.225);-webkit-text-stroke:0.25px;">0,25</div><div style="left:818.00px;top:28.15px;font-size:15px;line-height:15px;color:#f4f4f4;transform-origin:0 0;transform:scaleX(1.225);-webkit-text-stroke:0.25px;">0,34</div><div style="left:884.50px;top:28.15px;font-size:15px;line-height:15px;color:#f4f4f4;transform-origin:0 0;transform:scaleX(1.225);-webkit-text-stroke:0.25px;">0,27</div><div style="left:987.75px;top:28.15px;font-size:15px;line-height:15px;color:#f4f4f4;transform-origin:0 0;transform:scaleX(1.225);-webkit-text-stroke:0.25px;">0,26</div><div style="left:1099.00px;top:28.15px;font-size:15px;line-height:15px;color:#f4f4f4;transform-origin:0 0;transform:scaleX(1.225);-webkit-text-stroke:0.25px;">0,52</div><div style="left:1166.75px;top:28.15px;font-size:15px;line-height:15px;color:#f4f4f4;transform-origin:0 0;transform:scaleX(1.225);-webkit-text-stroke:0.25px;">0,21</div><div style="left:1280.50px;top:28.15px;font-size:15px;line-height:15px;color:#f4f4f4;transform-origin:0 0;transform:scaleX(1.225);-webkit-text-stroke:0.25px;">0,47</div><div style="left:0;width:1345px;top:47.5px;height:23.0px;background:#808080"></div><div style="left:15.00px;top:51.90px;font-size:15px;line-height:15px;color:#f4f4f4;transform-origin:0 0;transform:scaleX(1.225);-webkit-text-stroke:0.5px;font-weight:bold;">y: CIE31</div><div style="left:166.00px;top:51.90px;font-size:15px;line-height:15px;color:#f4f4f4;transform-origin:0 0;transform:scaleX(1.225);-webkit-text-stroke:0.25px;">0,33</div><div style="left:232.50px;top:51.90px;font-size:15px;line-height:15px;color:#f4f4f4;transform-origin:0 0;transform:scaleX(1.225);-webkit-text-stroke:0.25px;">0,33</div><div style="left:303.50px;top:51.90px;font-size:15px;line-height:15px;color:#f4f4f4;transform-origin:0 0;transform:scaleX(1.225);-webkit-text-stroke:0.25px;">0,33</div><div style="left:374.50px;top:51.90px;font-size:15px;line-height:15px;color:#f4f4f4;transform-origin:0 0;transform:scaleX(1.225);-webkit-text-stroke:0.25px;">0,33</div><div style="left:445.00px;top:51.90px;font-size:15px;line-height:15px;color:#f4f4f4;transform-origin:0 0;transform:scaleX(1.225);-webkit-text-stroke:0.25px;">0,33</div><div style="left:516.00px;top:51.90px;font-size:15px;line-height:15px;color:#f4f4f4;transform-origin:0 0;transform:scaleX(1.225);-webkit-text-stroke:0.25px;">0,35</div><div style="left:572.50px;top:51.90px;font-size:15px;line-height:15px;color:#f4f4f4;transform-origin:0 0;transform:scaleX(1.225);-webkit-text-stroke:0.25px;">0,37</div><div style="left:656.50px;top:51.90px;font-size:15px;line-height:15px;color:#f4f4f4;transform-origin:0 0;transform:scaleX(1.225);-webkit-text-stroke:0.25px;">0,36</div><div style="left:742.00px;top:51.90px;font-size:15px;line-height:15px;color:#f4f4f4;transform-origin:0 0;transform:scaleX(1.225);-webkit-text-stroke:0.25px;">0,27</div><div style="left:818.00px;top:51.90px;font-size:15px;line-height:15px;color:#f4f4f4;transform-origin:0 0;transform:scaleX(1.225);-webkit-text-stroke:0.25px;">0,44</div><div style="left:884.50px;top:51.90px;font-size:15px;line-height:15px;color:#f4f4f4;transform-origin:0 0;transform:scaleX(1.225);-webkit-text-stroke:0.25px;">0,25</div><div style="left:987.75px;top:51.90px;font-size:15px;line-height:15px;color:#f4f4f4;transform-origin:0 0;transform:scaleX(1.225);-webkit-text-stroke:0.25px;">0,36</div><div style="left:1099.00px;top:51.90px;font-size:15px;line-height:15px;color:#f4f4f4;transform-origin:0 0;transform:scaleX(1.225);-webkit-text-stroke:0.25px;">0,41</div><div style="left:1166.75px;top:51.90px;font-size:15px;line-height:15px;color:#f4f4f4;transform-origin:0 0;transform:scaleX(1.225);-webkit-text-stroke:0.25px;">0,19</div><div style="left:1280.50px;top:51.90px;font-size:15px;line-height:15px;color:#f4f4f4;transform-origin:0 0;transform:scaleX(1.225);-webkit-text-stroke:0.25px;">0,31</div><div style="left:0;width:1345px;top:70.5px;height:23.25px;background:#454545"></div><div style="left:15.00px;top:74.90px;font-size:15px;line-height:15px;color:#f4f4f4;transform-origin:0 0;transform:scaleX(1.225);-webkit-text-stroke:0.5px;font-weight:bold;">Y</div><div style="left:166.00px;top:74.90px;font-size:15px;line-height:15px;color:#f4f4f4;transform-origin:0 0;transform:scaleX(1.225);-webkit-text-stroke:0.25px;">528,19</div><div style="left:232.50px;top:74.90px;font-size:15px;line-height:15px;color:#f4f4f4;transform-origin:0 0;transform:scaleX(1.225);-webkit-text-stroke:0.25px;">421,86</div><div style="left:303.50px;top:74.90px;font-size:15px;line-height:15px;color:#f4f4f4;transform-origin:0 0;transform:scaleX(1.225);-webkit-text-stroke:0.25px;">340,71</div><div style="left:374.50px;top:74.90px;font-size:15px;line-height:15px;color:#f4f4f4;transform-origin:0 0;transform:scaleX(1.225);-webkit-text-stroke:0.25px;">262,81</div><div style="left:445.00px;top:74.90px;font-size:15px;line-height:15px;color:#f4f4f4;transform-origin:0 0;transform:scaleX(1.225);-webkit-text-stroke:0.25px;">183,97</div><div style="left:516.00px;top:74.90px;font-size:15px;line-height:15px;color:#f4f4f4;transform-origin:0 0;transform:scaleX(1.225);-webkit-text-stroke:0.25px;">0,07</div><div style="left:572.50px;top:74.90px;font-size:15px;line-height:15px;color:#f4f4f4;transform-origin:0 0;transform:scaleX(1.225);-webkit-text-stroke:0.25px;">52,13</div><div style="left:656.50px;top:74.90px;font-size:15px;line-height:15px;color:#f4f4f4;transform-origin:0 0;transform:scaleX(1.225);-webkit-text-stroke:0.25px;">188,24</div><div style="left:742.00px;top:74.90px;font-size:15px;line-height:15px;color:#f4f4f4;transform-origin:0 0;transform:scaleX(1.225);-webkit-text-stroke:0.25px;">99,50</div><div style="left:818.00px;top:74.90px;font-size:15px;line-height:15px;color:#f4f4f4;transform-origin:0 0;transform:scaleX(1.225);-webkit-text-stroke:0.25px;">68,11</div><div style="left:884.50px;top:74.90px;font-size:15px;line-height:15px;color:#f4f4f4;transform-origin:0 0;transform:scaleX(1.225);-webkit-text-stroke:0.25px;">125,14</div><div style="left:987.75px;top:74.90px;font-size:15px;line-height:15px;color:#f4f4f4;transform-origin:0 0;transform:scaleX(1.225);-webkit-text-stroke:0.25px;">224,38</div><div style="left:1099.00px;top:74.90px;font-size:15px;line-height:15px;color:#f4f4f4;transform-origin:0 0;transform:scaleX(1.225);-webkit-text-stroke:0.25px;">152,24</div><div style="left:1166.75px;top:74.90px;font-size:15px;line-height:15px;color:#f4f4f4;transform-origin:0 0;transform:scaleX(1.225);-webkit-text-stroke:0.25px;">60,40</div><div style="left:1280.50px;top:74.90px;font-size:15px;line-height:15px;color:#f4f4f4;transform-origin:0 0;transform:scaleX(1.225);-webkit-text-stroke:0.25px;">98,62</div><div style="left:0;width:1345px;top:93.75px;height:23.0px;background:#808080"></div><div style="left:15.00px;top:98.15px;font-size:15px;line-height:15px;color:#f4f4f4;transform-origin:0 0;transform:scaleX(1.225);-webkit-text-stroke:0.5px;font-weight:bold;">Target x:CIE31</div><div style="left:166.00px;top:98.15px;font-size:15px;line-height:15px;color:#f4f4f4;transform-origin:0 0;transform:scaleX(1.225);-webkit-text-stroke:0.25px;">0,31</div><div style="left:232.50px;top:98.15px;font-size:15px;line-height:15px;color:#f4f4f4;transform-origin:0 0;transform:scaleX(1.225);-webkit-text-stroke:0.25px;">0,31</div><div style="left:303.50px;top:98.15px;font-size:15px;line-height:15px;color:#f4f4f4;transform-origin:0 0;transform:scaleX(1.225);-webkit-text-stroke:0.25px;">0,31</div><div style="left:374.50px;top:98.15px;font-size:15px;line-height:15px;color:#f4f4f4;transform-origin:0 0;transform:scaleX(1.225);-webkit-text-stroke:0.25px;">0,31</div><div style="left:445.00px;top:98.15px;font-size:15px;line-height:15px;color:#f4f4f4;transform-origin:0 0;transform:scaleX(1.225);-webkit-text-stroke:0.25px;">0,31</div><div style="left:516.00px;top:98.15px;font-size:15px;line-height:15px;color:#f4f4f4;transform-origin:0 0;transform:scaleX(1.225);-webkit-text-stroke:0.25px;">0,31</div><div style="left:572.50px;top:98.15px;font-size:15px;line-height:15px;color:#f4f4f4;transform-origin:0 0;transform:scaleX(1.225);-webkit-text-stroke:0.25px;">0,40</div><div style="left:656.50px;top:98.15px;font-size:15px;line-height:15px;color:#f4f4f4;transform-origin:0 0;transform:scaleX(1.225);-webkit-text-stroke:0.25px;">0,38</div><div style="left:742.00px;top:98.15px;font-size:15px;line-height:15px;color:#f4f4f4;transform-origin:0 0;transform:scaleX(1.225);-webkit-text-stroke:0.25px;">0,25</div><div style="left:818.00px;top:98.15px;font-size:15px;line-height:15px;color:#f4f4f4;transform-origin:0 0;transform:scaleX(1.225);-webkit-text-stroke:0.25px;">0,34</div><div style="left:884.50px;top:98.15px;font-size:15px;line-height:15px;color:#f4f4f4;transform-origin:0 0;transform:scaleX(1.225);-webkit-text-stroke:0.25px;">0,27</div><div style="left:987.75px;top:98.15px;font-size:15px;line-height:15px;color:#f4f4f4;transform-origin:0 0;transform:scaleX(1.225);-webkit-text-stroke:0.25px;">0,26</div><div style="left:1099.00px;top:98.15px;font-size:15px;line-height:15px;color:#f4f4f4;transform-origin:0 0;transform:scaleX(1.225);-webkit-text-stroke:0.25px;">0,51</div><div style="left:1166.75px;top:98.15px;font-size:15px;line-height:15px;color:#f4f4f4;transform-origin:0 0;transform:scaleX(1.225);-webkit-text-stroke:0.25px;">0,22</div><div style="left:1280.50px;top:98.15px;font-size:15px;line-height:15px;color:#f4f4f4;transform-origin:0 0;transform:scaleX(1.225);-webkit-text-stroke:0.25px;">0,46</div><div style="left:0;width:1345px;top:116.75px;height:23.75px;background:#454545"></div><div style="left:15.00px;top:121.15px;font-size:15px;line-height:15px;color:#f4f4f4;transform-origin:0 0;transform:scaleX(1.225);-webkit-text-stroke:0.5px;font-weight:bold;">Target y:CIE31</div><div style="left:166.00px;top:121.15px;font-size:15px;line-height:15px;color:#f4f4f4;transform-origin:0 0;transform:scaleX(1.225);-webkit-text-stroke:0.25px;">0,33</div><div style="left:232.50px;top:121.15px;font-size:15px;line-height:15px;color:#f4f4f4;transform-origin:0 0;transform:scaleX(1.225);-webkit-text-stroke:0.25px;">0,33</div><div style="left:303.50px;top:121.15px;font-size:15px;line-height:15px;color:#f4f4f4;transform-origin:0 0;transform:scaleX(1.225);-webkit-text-stroke:0.25px;">0,33</div><div style="left:374.50px;top:121.15px;font-size:15px;line-height:15px;color:#f4f4f4;transform-origin:0 0;transform:scaleX(1.225);-webkit-text-stroke:0.25px;">0,33</div><div style="left:445.00px;top:121.15px;font-size:15px;line-height:15px;color:#f4f4f4;transform-origin:0 0;transform:scaleX(1.225);-webkit-text-stroke:0.25px;">0,33</div><div style="left:516.00px;top:121.15px;font-size:15px;line-height:15px;color:#f4f4f4;transform-origin:0 0;transform:scaleX(1.225);-webkit-text-stroke:0.25px;">0,33</div><div style="left:572.50px;top:121.15px;font-size:15px;line-height:15px;color:#f4f4f4;transform-origin:0 0;transform:scaleX(1.225);-webkit-text-stroke:0.25px;">0,36</div><div style="left:656.50px;top:121.15px;font-size:15px;line-height:15px;color:#f4f4f4;transform-origin:0 0;transform:scaleX(1.225);-webkit-text-stroke:0.25px;">0,36</div><div style="left:742.00px;top:121.15px;font-size:15px;line-height:15px;color:#f4f4f4;transform-origin:0 0;transform:scaleX(1.225);-webkit-text-stroke:0.25px;">0,27</div><div style="left:818.00px;top:121.15px;font-size:15px;line-height:15px;color:#f4f4f4;transform-origin:0 0;transform:scaleX(1.225);-webkit-text-stroke:0.25px;">0,43</div><div style="left:884.50px;top:121.15px;font-size:15px;line-height:15px;color:#f4f4f4;transform-origin:0 0;transform:scaleX(1.225);-webkit-text-stroke:0.25px;">0,25</div><div style="left:987.75px;top:121.15px;font-size:15px;line-height:15px;color:#f4f4f4;transform-origin:0 0;transform:scaleX(1.225);-webkit-text-stroke:0.25px;">0,36</div><div style="left:1099.00px;top:121.15px;font-size:15px;line-height:15px;color:#f4f4f4;transform-origin:0 0;transform:scaleX(1.225);-webkit-text-stroke:0.25px;">0,41</div><div style="left:1166.75px;top:121.15px;font-size:15px;line-height:15px;color:#f4f4f4;transform-origin:0 0;transform:scaleX(1.225);-webkit-text-stroke:0.25px;">0,19</div><div style="left:1280.50px;top:121.15px;font-size:15px;line-height:15px;color:#f4f4f4;transform-origin:0 0;transform:scaleX(1.225);-webkit-text-stroke:0.25px;">0,31</div><div style="left:0;width:1345px;top:140.5px;height:23.25px;background:#808080"></div><div style="left:15.00px;top:144.90px;font-size:15px;line-height:15px;color:#f4f4f4;transform-origin:0 0;transform:scaleX(1.225);-webkit-text-stroke:0.5px;font-weight:bold;">Target Y</div><div style="left:166.00px;top:144.90px;font-size:15px;line-height:15px;color:#f4f4f4;transform-origin:0 0;transform:scaleX(1.225);-webkit-text-stroke:0.25px;">528,19</div><div style="left:232.50px;top:144.90px;font-size:15px;line-height:15px;color:#f4f4f4;transform-origin:0 0;transform:scaleX(1.225);-webkit-text-stroke:0.25px;">417,95</div><div style="left:303.50px;top:144.90px;font-size:15px;line-height:15px;color:#f4f4f4;transform-origin:0 0;transform:scaleX(1.225);-webkit-text-stroke:0.25px;">336,77</div><div style="left:374.50px;top:144.90px;font-size:15px;line-height:15px;color:#f4f4f4;transform-origin:0 0;transform:scaleX(1.225);-webkit-text-stroke:0.25px;">259,35</div><div style="left:445.00px;top:144.90px;font-size:15px;line-height:15px;color:#f4f4f4;transform-origin:0 0;transform:scaleX(1.225);-webkit-text-stroke:0.25px;">180,60</div><div style="left:516.00px;top:144.90px;font-size:15px;line-height:15px;color:#f4f4f4;transform-origin:0 0;transform:scaleX(1.225);-webkit-text-stroke:0.25px;">0,00</div><div style="left:572.50px;top:144.90px;font-size:15px;line-height:15px;color:#f4f4f4;transform-origin:0 0;transform:scaleX(1.225);-webkit-text-stroke:0.25px;">53,21</div><div style="left:656.50px;top:144.90px;font-size:15px;line-height:15px;color:#f4f4f4;transform-origin:0 0;transform:scaleX(1.225);-webkit-text-stroke:0.25px;">184,31</div><div style="left:742.00px;top:144.90px;font-size:15px;line-height:15px;color:#f4f4f4;transform-origin:0 0;transform:scaleX(1.225);-webkit-text-stroke:0.25px;">98,76</div><div style="left:818.00px;top:144.90px;font-size:15px;line-height:15px;color:#f4f4f4;transform-origin:0 0;transform:scaleX(1.225);-webkit-text-stroke:0.25px;">68,84</div><div style="left:884.50px;top:144.90px;font-size:15px;line-height:15px;color:#f4f4f4;transform-origin:0 0;transform:scaleX(1.225);-webkit-text-stroke:0.25px;">123,17</div><div style="left:987.75px;top:144.90px;font-size:15px;line-height:15px;color:#f4f4f4;transform-origin:0 0;transform:scaleX(1.225);-webkit-text-stroke:0.25px;">221,17</div><div style="left:1099.00px;top:144.90px;font-size:15px;line-height:15px;color:#f4f4f4;transform-origin:0 0;transform:scaleX(1.225);-webkit-text-stroke:0.25px;">149,73</div><div style="left:1166.75px;top:144.90px;font-size:15px;line-height:15px;color:#f4f4f4;transform-origin:0 0;transform:scaleX(1.225);-webkit-text-stroke:0.25px;">62,08</div><div style="left:1280.50px;top:144.90px;font-size:15px;line-height:15px;color:#f4f4f4;transform-origin:0 0;transform:scaleX(1.225);-webkit-text-stroke:0.25px;">98,64</div><div style="left:0;width:1345px;top:163.75px;height:23.0px;background:#454545"></div><div style="left:15.00px;top:168.15px;font-size:15px;line-height:15px;color:#f4f4f4;transform-origin:0 0;transform:scaleX(1.225);-webkit-text-stroke:0.5px;font-weight:bold;">ΔE 2000</div><div style="left:166.00px;top:168.15px;font-size:15px;line-height:15px;color:#f4f4f4;transform-origin:0 0;transform:scaleX(1.225);-webkit-text-stroke:0.25px;">2,46</div><div style="left:232.50px;top:168.15px;font-size:15px;line-height:15px;color:#f4f4f4;transform-origin:0 0;transform:scaleX(1.225);-webkit-text-stroke:0.25px;">2,03</div><div style="left:303.50px;top:168.15px;font-size:15px;line-height:15px;color:#f4f4f4;transform-origin:0 0;transform:scaleX(1.225);-webkit-text-stroke:0.25px;">2,67</div><div style="left:374.50px;top:168.15px;font-size:15px;line-height:15px;color:#f4f4f4;transform-origin:0 0;transform:scaleX(1.225);-webkit-text-stroke:0.25px;">2,14</div><div style="left:445.00px;top:168.15px;font-size:15px;line-height:15px;color:#f4f4f4;transform-origin:0 0;transform:scaleX(1.225);-webkit-text-stroke:0.25px;">1,68</div><div style="left:516.00px;top:168.15px;font-size:15px;line-height:15px;color:#f4f4f4;transform-origin:0 0;transform:scaleX(1.225);-webkit-text-stroke:0.25px;">0,11</div><div style="left:572.50px;top:168.15px;font-size:15px;line-height:15px;color:#f4f4f4;transform-origin:0 0;transform:scaleX(1.225);-webkit-text-stroke:0.25px;">1,20</div><div style="left:656.50px;top:168.15px;font-size:15px;line-height:15px;color:#f4f4f4;transform-origin:0 0;transform:scaleX(1.225);-webkit-text-stroke:0.25px;">1,42</div><div style="left:742.00px;top:168.15px;font-size:15px;line-height:15px;color:#f4f4f4;transform-origin:0 0;transform:scaleX(1.225);-webkit-text-stroke:0.25px;">1,68</div><div style="left:818.00px;top:168.15px;font-size:15px;line-height:15px;color:#f4f4f4;transform-origin:0 0;transform:scaleX(1.225);-webkit-text-stroke:0.25px;">1,00</div><div style="left:884.50px;top:168.15px;font-size:15px;line-height:15px;color:#f4f4f4;transform-origin:0 0;transform:scaleX(1.225);-webkit-text-stroke:0.25px;">0,95</div><div style="left:987.75px;top:168.15px;font-size:15px;line-height:15px;color:#f4f4f4;transform-origin:0 0;transform:scaleX(1.225);-webkit-text-stroke:0.25px;">0,84</div><div style="left:1099.00px;top:168.15px;font-size:15px;line-height:15px;color:#f4f4f4;transform-origin:0 0;transform:scaleX(1.225);-webkit-text-stroke:0.25px;">1,57</div><div style="left:1166.75px;top:168.15px;font-size:15px;line-height:15px;color:#f4f4f4;transform-origin:0 0;transform:scaleX(1.225);-webkit-text-stroke:0.25px;">1,32</div><div style="left:1280.50px;top:168.15px;font-size:15px;line-height:15px;color:#f4f4f4;transform-origin:0 0;transform:scaleX(1.225);-webkit-text-stroke:0.25px;">0,74</div><div style="left:0;width:1345px;top:186.75px;height:23.25px;background:#808080"></div><div style="left:15.00px;top:191.15px;font-size:15px;line-height:15px;color:#f4f4f4;transform-origin:0 0;transform:scaleX(1.225);-webkit-text-stroke:0.5px;font-weight:bold;">ΔE ITP</div><div style="left:166.00px;top:191.15px;font-size:15px;line-height:15px;color:#f4f4f4;transform-origin:0 0;transform:scaleX(1.225);-webkit-text-stroke:0.25px;">1,50</div><div style="left:232.50px;top:191.15px;font-size:15px;line-height:15px;color:#f4f4f4;transform-origin:0 0;transform:scaleX(1.225);-webkit-text-stroke:0.25px;">1,48</div><div style="left:303.50px;top:191.15px;font-size:15px;line-height:15px;color:#f4f4f4;transform-origin:0 0;transform:scaleX(1.225);-webkit-text-stroke:0.25px;">2,01</div><div style="left:374.50px;top:191.15px;font-size:15px;line-height:15px;color:#f4f4f4;transform-origin:0 0;transform:scaleX(1.225);-webkit-text-stroke:0.25px;">1,82</div><div style="left:445.00px;top:191.15px;font-size:15px;line-height:15px;color:#f4f4f4;transform-origin:0 0;transform:scaleX(1.225);-webkit-text-stroke:0.25px;">1,89</div><div style="left:516.00px;top:191.15px;font-size:15px;line-height:15px;color:#f4f4f4;transform-origin:0 0;transform:scaleX(1.225);-webkit-text-stroke:0.25px;">40,04</div><div style="left:572.50px;top:191.15px;font-size:15px;line-height:15px;color:#f4f4f4;transform-origin:0 0;transform:scaleX(1.225);-webkit-text-stroke:0.25px;">4,05</div><div style="left:656.50px;top:191.15px;font-size:15px;line-height:15px;color:#f4f4f4;transform-origin:0 0;transform:scaleX(1.225);-webkit-text-stroke:0.25px;">2,31</div><div style="left:742.00px;top:191.15px;font-size:15px;line-height:15px;color:#f4f4f4;transform-origin:0 0;transform:scaleX(1.225);-webkit-text-stroke:0.25px;">3,07</div><div style="left:818.00px;top:191.15px;font-size:15px;line-height:15px;color:#f4f4f4;transform-origin:0 0;transform:scaleX(1.225);-webkit-text-stroke:0.25px;">3,58</div><div style="left:884.50px;top:191.15px;font-size:15px;line-height:15px;color:#f4f4f4;transform-origin:0 0;transform:scaleX(1.225);-webkit-text-stroke:0.25px;">2,11</div><div style="left:987.75px;top:191.15px;font-size:15px;line-height:15px;color:#f4f4f4;transform-origin:0 0;transform:scaleX(1.225);-webkit-text-stroke:0.25px;">1,75</div><div style="left:1099.00px;top:191.15px;font-size:15px;line-height:15px;color:#f4f4f4;transform-origin:0 0;transform:scaleX(1.225);-webkit-text-stroke:0.25px;">5,33</div><div style="left:1166.75px;top:191.15px;font-size:15px;line-height:15px;color:#f4f4f4;transform-origin:0 0;transform:scaleX(1.225);-webkit-text-stroke:0.25px;">5,66</div><div style="left:1280.50px;top:191.15px;font-size:15px;line-height:15px;color:#f4f4f4;transform-origin:0 0;transform:scaleX(1.225);-webkit-text-stroke:0.25px;">3,03</div></div><div style="left:323px;top:842px;width:1345px;height:15px;background:#636363"></div><div style="left:324px;top:842px;width:14px;height:15px;background:#8a8a8a;border-radius:3px"></div><div style="left:327px;top:845px;width:0;height:0;border-top:4.5px solid transparent;border-bottom:4.5px solid transparent;border-right:6px solid #3a3a3a"></div><div style="left:1652px;top:842px;width:14px;height:15px;background:#8a8a8a;border-radius:3px"></div><div style="left:1657px;top:845px;width:0;height:0;border-top:4.5px solid transparent;border-bottom:4.5px solid transparent;border-left:6px solid #3a3a3a"></div><div style="left:342px;top:843px;width:645px;height:13px;background:#454545;border-radius:6px"></div><div style="left:0;top:866px;width:1668px;height:78px;background:#3c3c3c"></div><div class="btn" style="left:-32px"><i style="background:#8580b1;height:15px"></i></div><div style="left:-22.50px;top:898.75px;font-size:12.7px;line-height:12.7px;color:#333;transform-origin:0 0;transform:scaleX(0.9730);font-weight:bold;">Blue</div><div style="left:-22.50px;top:913.75px;font-size:12.7px;line-height:12.7px;color:#333;transform-origin:0 0;transform:scaleX(1.0000);font-weight:bold;">Flower</div><div class="btn" style="left:33px"><i style="background:#67bdaa;height:15px"></i></div><div style="left:45.50px;top:898.75px;font-size:12.7px;line-height:12.7px;color:#333;transform-origin:0 0;transform:scaleX(0.9359);font-weight:bold;">Bluish</div><div style="left:45.50px;top:913.75px;font-size:12.7px;line-height:12.7px;color:#333;transform-origin:0 0;transform:scaleX(1.0000);font-weight:bold;">Green</div><div class="btn" style="left:98px"><i style="background:#d67e2c;height:30px"></i></div><div style="left:107.00px;top:913.75px;font-size:12.7px;line-height:12.7px;color:#333;transform-origin:0 0;transform:scaleX(0.9832);font-weight:bold;">Orange</div><div class="btn" style="left:163px"><i style="background:#505ba6;height:15px"></i></div><div style="left:169.00px;top:898.75px;font-size:12.7px;line-height:12.7px;color:#333;transform-origin:0 0;transform:scaleX(0.9755);font-weight:bold;">Purplish</div><div style="left:169.00px;top:913.75px;font-size:12.7px;line-height:12.7px;color:#333;transform-origin:0 0;transform:scaleX(0.9730);font-weight:bold;">Blue</div><div class="btn" style="left:228px"><i style="background:#c15a63;height:15px"></i></div><div style="left:228.75px;top:898.75px;font-size:12.7px;line-height:12.7px;color:#333;transform-origin:0 0;transform:scaleX(1.0573);font-weight:bold;">Moderate</div><div style="left:228.75px;top:913.75px;font-size:12.7px;line-height:12.7px;color:#333;transform-origin:0 0;transform:scaleX(0.9479);font-weight:bold;">Red</div><div class="btn" style="left:293px"><i style="background:#5e3c6c;height:30px"></i></div><div style="left:304.00px;top:913.75px;font-size:12.7px;line-height:12.7px;color:#333;transform-origin:0 0;transform:scaleX(1.0000);font-weight:bold;">Purple</div><div class="btn" style="left:358px"><i style="background:#9dbc40;height:15px"></i></div><div style="left:368.75px;top:898.75px;font-size:12.7px;line-height:12.7px;color:#333;transform-origin:0 0;transform:scaleX(1.0063);font-weight:bold;">Yellow</div><div style="left:368.75px;top:913.75px;font-size:12.7px;line-height:12.7px;color:#333;transform-origin:0 0;transform:scaleX(1.0000);font-weight:bold;">Green</div><div class="btn" style="left:423px"><i style="background:#e0a32e;height:15px"></i></div><div style="left:431.50px;top:898.75px;font-size:12.7px;line-height:12.7px;color:#333;transform-origin:0 0;transform:scaleX(0.9832);font-weight:bold;">Orange</div><div style="left:431.50px;top:913.75px;font-size:12.7px;line-height:12.7px;color:#333;transform-origin:0 0;transform:scaleX(1.0063);font-weight:bold;">Yellow</div><div class="btn" style="left:488px"><i style="background:#383d96;height:30px"></i></div><div style="left:505.25px;top:913.75px;font-size:12.7px;line-height:12.7px;color:#333;transform-origin:0 0;transform:scaleX(0.9730);font-weight:bold;">Blue</div><div class="btn" style="left:553px"><i style="background:#469449;height:30px"></i></div><div style="left:565.25px;top:913.75px;font-size:12.7px;line-height:12.7px;color:#333;transform-origin:0 0;transform:scaleX(1.0000);font-weight:bold;">Green</div><div class="btn" style="left:618px"><i style="background:#af363c;height:30px"></i></div><div style="left:637.00px;top:913.75px;font-size:12.7px;line-height:12.7px;color:#333;transform-origin:0 0;transform:scaleX(0.9479);font-weight:bold;">Red</div><div class="btn" style="left:683px"><i style="background:#e7c71f;height:30px"></i></div><div style="left:694.00px;top:913.75px;font-size:12.7px;line-height:12.7px;color:#333;transform-origin:0 0;transform:scaleX(1.0063);font-weight:bold;">Yellow</div><div class="btn" style="left:748px"><i style="background:#bb5695;height:30px"></i></div><div style="left:751.50px;top:913.75px;font-size:12.7px;line-height:12.7px;color:#333;transform-origin:0 0;transform:scaleX(1.0433);font-weight:bold;">Magenta</div><div class="btn" style="left:813px"><i style="background:#0885a1;height:30px"></i></div><div style="left:829.00px;top:913.75px;font-size:12.7px;line-height:12.7px;color:#333;transform-origin:0 0;transform:scaleX(0.9360);font-weight:bold;">Cyan</div><div class="btn" style="left:878px"><i style="background:#ff0000;height:30px"></i></div><div style="left:879.00px;top:913.75px;font-size:12.7px;line-height:12.7px;color:#333;transform-origin:0 0;transform:scaleX(0.9876);font-weight:bold;">100% Red</div><div class="btn" style="left:943px"><i style="background:#00ff00;height:15px"></i></div><div style="left:955.75px;top:898.75px;font-size:12.7px;line-height:12.7px;color:#333;transform-origin:0 0;transform:scaleX(1.0077);font-weight:bold;">100%</div><div style="left:955.75px;top:913.75px;font-size:12.7px;line-height:12.7px;color:#333;transform-origin:0 0;transform:scaleX(1.0000);font-weight:bold;">Green</div><div class="btn" style="left:1008px"><i style="background:#0000ff;height:15px"></i></div><div style="left:1022.00px;top:898.75px;font-size:12.7px;line-height:12.7px;color:#333;transform-origin:0 0;transform:scaleX(1.0077);font-weight:bold;">100%</div><div style="left:1022.00px;top:913.75px;font-size:12.7px;line-height:12.7px;color:#333;transform-origin:0 0;transform:scaleX(0.9730);font-weight:bold;">Blue</div><div class="btn" style="left:1073px"><i style="background:#00ffff;height:15px"></i></div><div style="left:1087.25px;top:898.75px;font-size:12.7px;line-height:12.7px;color:#333;transform-origin:0 0;transform:scaleX(1.0077);font-weight:bold;">100%</div><div style="left:1087.25px;top:913.75px;font-size:12.7px;line-height:12.7px;color:#333;transform-origin:0 0;transform:scaleX(0.9360);font-weight:bold;">Cyan</div><div class="btn" style="left:1138px"><i style="background:#ff00ff;height:15px"></i></div><div style="left:1142.00px;top:898.75px;font-size:12.7px;line-height:12.7px;color:#333;transform-origin:0 0;transform:scaleX(1.0077);font-weight:bold;">100%</div><div style="left:1142.00px;top:913.75px;font-size:12.7px;line-height:12.7px;color:#333;transform-origin:0 0;transform:scaleX(1.0433);font-weight:bold;">Magenta</div><div class="btn" style="left:1203px;background:linear-gradient(#212121,#303030);box-shadow:none"><i style="background:#ffff00;height:15px"></i></div><div style="left:1213.50px;top:898.75px;font-size:12.7px;line-height:12.7px;color:#fff;transform-origin:0 0;transform:scaleX(1.0077);font-weight:bold;">100%</div><div style="left:1213.50px;top:913.75px;font-size:12.7px;line-height:12.7px;color:#fff;transform-origin:0 0;transform:scaleX(1.0063);font-weight:bold;">Yellow</div><div style="left:0;top:930px;width:1264px;height:14px;background:#636363"></div><div style="left:1px;top:930px;width:14px;height:14px;background:#8a8a8a;border-radius:3px"></div><div style="left:4px;top:933px;width:0;height:0;border-top:4.5px solid transparent;border-bottom:4.5px solid transparent;border-right:6px solid #3a3a3a"></div><div style="left:1250.5px;top:930px;width:14px;height:14px;background:#8a8a8a;border-radius:3px"></div><div style="left:1255.5px;top:933px;width:0;height:0;border-top:4.5px solid transparent;border-bottom:4.5px solid transparent;border-left:6px solid #3a3a3a"></div><div style="left:451px;top:931px;width:796px;height:13px;background:#454545;border-radius:6px"></div><div style="left:1266px;top:868px;width:60px;height:24px;background:linear-gradient(#a8a8a8,#8a8a8a);border-radius:5px 5px 0 0;border:1px solid #555;border-bottom-color:#4a4a4a"></div><div style="left:1266px;top:892px;width:60px;height:52px;background:linear-gradient(#9c9c9c,#6a6a6a);border:1px solid #555;border-top-color:#b0b0b0"></div><div style="left:1286.5px;top:871px;width:19px;height:19px;border-radius:50%;background:linear-gradient(#7a7a7a,#a8a8a8)"></div><div style="left:1290.7px;top:876.5px;width:0;height:0;border-left:5.3px solid transparent;border-right:5.3px solid transparent;border-bottom:5.5px solid #333"></div><div style="left:1276.5px;top:899px;width:39px;height:38px;border-radius:6px;border:2.6px solid #262626;background:linear-gradient(#b8b8b8,#b0b0b0 48%,#8e8e8e 52%,#9a9a9a)"></div><div style="left:1287.7px;top:910px;width:17.3px;height:17.3px;background:linear-gradient(#1a1a1a,#111 48%,#000 52%)"></div><div style="left:1327px;top:868px;width:58.5px;height:38.5px;background:linear-gradient(#a8a8a8,#6a6a6a);border-right:1px solid #4a4a4a;border-bottom:1px solid #444"></div><div style="left:1343.8px;top:874.5px;width:25px;height:25px;border-radius:50%;background:linear-gradient(#7a7a7a,#a8a8a8)"></div><div style="left:1385.5px;top:868px;width:56.0px;height:38.5px;background:linear-gradient(#a8a8a8,#6a6a6a);border-right:1px solid #4a4a4a;border-bottom:1px solid #444"></div><div style="left:1401.0px;top:874.5px;width:25px;height:25px;border-radius:50%;background:linear-gradient(#7a7a7a,#a8a8a8)"></div><div style="left:1441.5px;top:868px;width:56.0px;height:38.5px;background:linear-gradient(#a8a8a8,#6a6a6a);border-right:1px solid #4a4a4a;border-bottom:1px solid #444"></div><div style="left:1457.0px;top:874.5px;width:25px;height:25px;border-radius:50%;background:linear-gradient(#7a7a7a,#a8a8a8)"></div><div style="left:1498.5px;top:868px;width:56.0px;height:38.5px;background:linear-gradient(#a8a8a8,#6a6a6a);border-right:1px solid #4a4a4a;border-bottom:1px solid #444"></div><div style="left:1514.0px;top:874.5px;width:25px;height:25px;border-radius:50%;background:linear-gradient(#7a7a7a,#a8a8a8)"></div><div style="left:1554.5px;top:868px;width:56.5px;height:38.5px;background:#333;border-right:1px solid #4a4a4a;border-bottom:1px solid #444"></div><div style="left:1570.2px;top:874.5px;width:25px;height:25px;border-radius:50%;background:linear-gradient(#2a2a2a,#3a3a3a)"></div><div style="left:1611px;top:868px;width:57px;height:38.5px;background:linear-gradient(#a8a8a8,#6a6a6a);border-right:1px solid #4a4a4a;border-bottom:1px solid #444"></div><div style="left:1627.0px;top:874.5px;width:25px;height:25px;border-radius:50%;background:linear-gradient(#7a7a7a,#a8a8a8)"></div><div style="left:1351.7px;top:882.4px;width:9.4px;height:9.2px;background:#383838"></div><div style="left:1410px;top:882.3px;width:0;height:0;border-top:6px solid transparent;border-bottom:6px solid transparent;border-left:10.8px solid #353535"></div><div style="left:1456.5px;top:878px;width:26px;text-align:center;font-size:12.5px;font-weight:bold;color:#333;line-height:18px;letter-spacing:-.5px">[↔]</div><div style="left:1514px;top:875px;width:25px;text-align:center;font-size:19px;font-weight:bold;color:#333;line-height:24px">∞</div><div style="left:1327px;top:907.5px;width:170.5px;height:37px;background:linear-gradient(#a8a8a8,#6a6a6a);border-top:1px solid #b8b8b8"></div><div style="left:1498.5px;top:907.5px;width:170px;height:37px;background:linear-gradient(#a8a8a8,#6a6a6a);border-top:1px solid #b8b8b8"></div><div style="left:1353px;top:914px;width:26px;height:26px;border-radius:50%;background:linear-gradient(#7a7a7a,#a8a8a8)"></div><div style="left:1619px;top:914px;width:26px;height:26px;border-radius:50%;background:linear-gradient(#7a7a7a,#a8a8a8)"></div><svg width="1668" height="944" viewBox="0 0 1668 944"><g transform="translate(1582.7,887)" fill="none" stroke="#232323" stroke-width="2.6"><path d="M-5.6,-1.2A5.8,5.8 0 0 1 4.2,-4"/><path d="M5.6,1.2A5.8,5.8 0 0 1 -4.2,4"/><path d="M1.6,-2.6h4.6v-4.6z M-1.6,2.6h-4.6v4.6z" fill="#232323" stroke="none"/></g><g fill="none" stroke="#3a3a3a" stroke-width="2"><path d="M1365,920.5l-5,6.5l5,6.5M1371,920.5l-5,6.5l5,6.5M1626.5,920.5l5,6.5l-5,6.5M1632.5,920.5l5,6.5l-5,6.5"/></g></svg><div style="left:1400.25px;top:912.99px;font-size:26px;line-height:26px;color:#3c3c3c;transform-origin:0 0;transform:scaleX(1.0690);-webkit-text-stroke:0.45px;">Back</div><div style="left:1533.50px;top:912.99px;font-size:26px;line-height:26px;color:#3c3c3c;transform-origin:0 0;transform:scaleX(1.1916);-webkit-text-stroke:0.45px;">Next</div></body></html>
